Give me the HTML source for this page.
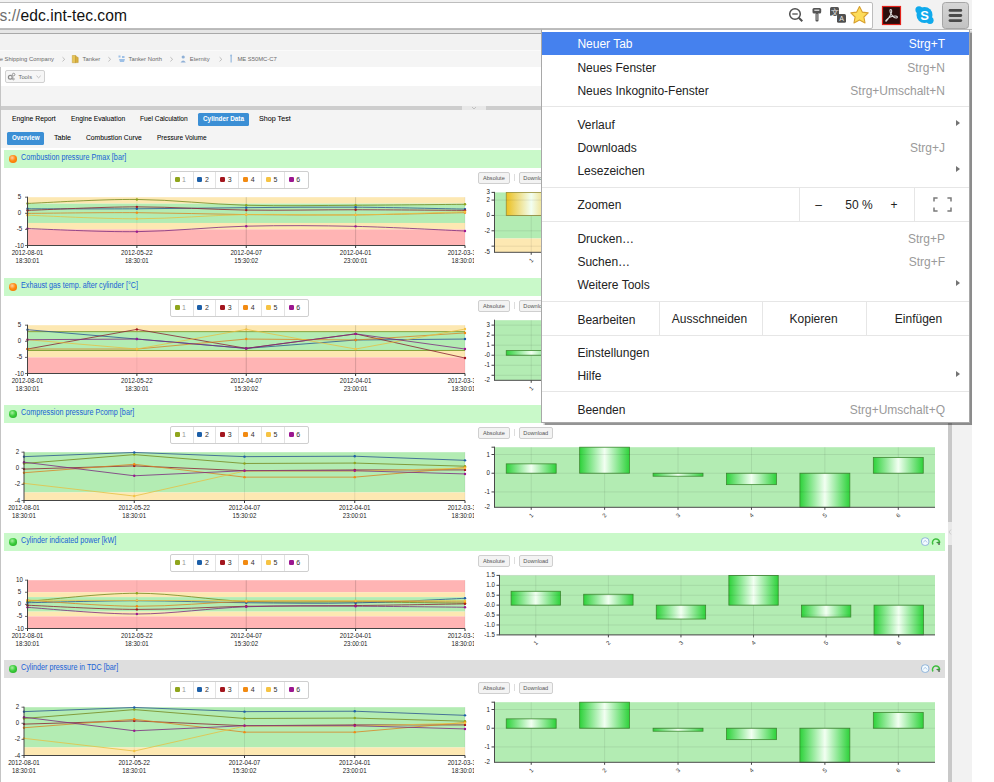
<!DOCTYPE html><html><head><meta charset="utf-8"><style>

*{margin:0;padding:0;box-sizing:border-box}
html,body{width:994px;height:782px;overflow:hidden;background:#fff;font-family:"Liberation Sans", sans-serif}
.a{position:absolute}
#chrome{position:absolute;left:0;top:0;width:994px;height:34px;background:#f2f2f2}
#url{position:absolute;left:-6px;top:2px;width:879px;height:27px;background:#fff;border:1px solid #bdbdbd;border-radius:2px}
#urltxt{position:absolute;left:-0.5px;top:7.37px;font-size:15.6px;line-height:1.117;color:#111;white-space:nowrap;letter-spacing:0.05px}
#page{position:absolute;left:0;top:34px;width:948px;height:748px;background:#f2f2f2}
.hdr{position:absolute;left:4px;width:941px;height:18px}
.orb{position:absolute;left:9px;width:7.5px;height:7.5px;border-radius:50%}
.orb.o{background:radial-gradient(circle at 40% 35%,#ffd0a0 0,#ff8a10 45%,#f07000 100%)}
.orb.g{background:radial-gradient(circle at 40% 35%,#a8f0a0 0,#3ccc3c 45%,#22a822 100%)}
.ttl{position:absolute;left:20.5px;font-size:8.4px;line-height:1.117;color:#1862d6;white-space:nowrap;transform:scaleX(0.86);transform-origin:0 0}
.leg{position:absolute;left:169.5px;width:139px;height:18px;background:#fff;border:1px solid #cfcfcf;border-radius:2px}
.li{position:absolute;top:0;width:23px;height:16px;border-right:1px solid #e2e2e2;font-size:7px;line-height:16px;color:#333;padding-left:11.6px}
.li:last-child{border-right:none}
.li i{position:absolute;left:4px;top:5px;width:5px;height:5px;border-radius:1.3px}
.li:first-child{color:#999}
.btn{position:absolute;height:12.5px;background:#f3f3f3;border:1px solid #cfcfcf;border-radius:2px;font-size:5.6px;line-height:10.5px;text-align:center;color:#555;white-space:nowrap}
.bsep{position:absolute;left:513.5px;width:1px;height:7px;background:#ddd}
.ico1{position:absolute;left:920.5px;width:8px;height:8px;border:1px solid #8ab0e0;border-radius:50%}
.ico2{position:absolute;left:931px;width:9px;height:8px}

</style></head><body>
<div id="chrome"><div id="url"></div>
<div id="urltxt"><span style="color:#6e6e6e">s://</span>edc.int-tec.com</div>
</div>
<div class="a" style="left:0;top:29px;width:972px;height:1px;background:#b9b9b9"></div>
<div class="a" style="left:0;top:30px;width:948px;height:3px;background:#e6e6e6"></div>
<div class="a" style="left:0;top:33px;width:948px;height:1px;background:#a9a9a9"></div>
<div class="a" style="left:972px;top:0;width:22px;height:782px;background:#fff"></div>
<div class="a" style="left:948px;top:34px;width:4px;height:748px;background:#c8c8c8"></div>
<div class="a" style="left:952px;top:34px;width:20px;height:748px;background:#f2f2f2"></div>
<div class="a" style="left:948px;top:521.5px;width:4px;height:23px;background:#e9e9e9"></div>
<svg class="a" style="left:948px;top:528px" width="4" height="8"><path d="M3 1.5 L1 4 L3 6.5" fill="none" stroke="#c4c4c4" stroke-width="0.8"/></svg>
<div class="a" style="left:0;top:34px;width:948px;height:16px;background:#f2f2f2"></div>
<div class="a" style="left:0;top:50px;width:948px;height:1px;background:#fafafa"></div>
<div class="a" style="left:0;top:51px;width:948px;height:16px;background:#f5f5f5"></div>
<div class="a" style="left:0;top:67px;width:948px;height:19px;background:#fff"></div>
<div class="a" style="left:0;top:86px;width:948px;height:20px;background:#f4f4f4"></div>
<div class="a" style="left:0;top:106px;width:948px;height:3.5px;background:#cdcdcd"></div>
<div class="a" style="left:462px;top:106px;width:24px;height:3.5px;background:#e8e8e8"></div>
<svg class="a" style="left:466px;top:106px" width="16" height="4"><path d="M6 1 L8 3 L10 1" fill="none" stroke="#b5b5b5" stroke-width="0.8"/></svg>
<div class="a" style="left:0;top:109.5px;width:948px;height:38.5px;background:#f4f4f4"></div>
<div class="a" style="left:0;top:148px;width:948px;height:634px;background:#fff"></div>
<div class="a" style="left:0;top:67px;width:1.2px;height:715px;background:#c4c4c4"></div>
<div class="a" style="left:-1.6px;top:55.91px;font-size:5.85px;line-height:1.117;color:#6a6a6a;white-space:nowrap;">le Shipping Company</div>
<div class="a" style="left:82.6px;top:55.91px;font-size:5.85px;line-height:1.117;color:#6a6a6a;white-space:nowrap;">Tanker</div>
<div class="a" style="left:128.5px;top:55.91px;font-size:5.85px;line-height:1.117;color:#6a6a6a;white-space:nowrap;">Tanker North</div>
<div class="a" style="left:189.8px;top:55.91px;font-size:5.85px;line-height:1.117;color:#6a6a6a;white-space:nowrap;">Eternity</div>
<div class="a" style="left:237.4px;top:55.91px;font-size:5.85px;line-height:1.117;color:#6a6a6a;white-space:nowrap;">ME S50MC-C7</div>
<svg class="a" style="left:0;top:50px" width="300" height="18">
<path d="M62.5 7.2 L64.7 9.3 L62.5 11.4" fill="none" stroke="#b5b5b5" stroke-width="0.9"/>
<path d="M108.4 7.2 L110.60000000000001 9.3 L108.4 11.4" fill="none" stroke="#b5b5b5" stroke-width="0.9"/>
<path d="M170.4 7.2 L172.6 9.3 L170.4 11.4" fill="none" stroke="#b5b5b5" stroke-width="0.9"/>
<path d="M219.6 7.2 L221.79999999999998 9.3 L219.6 11.4" fill="none" stroke="#b5b5b5" stroke-width="0.9"/>
<path d="M72.3 5.5 h3.6 v7.2 h-3.6z" fill="#e7c55a" stroke="#c9a43a" stroke-width="0.6"/><path d="M75.5 6.2 L78.2 7.5 V12.6 H75.5z" fill="#d9b040" stroke="#b8922a" stroke-width="0.5"/>
<path d="M118.5 5.5 h2 v2 h-2z M122 6 h2.5 v2 h-2.5z M119 9 h6 l-1 3 h-4z" fill="#9dc0e6"/>
<circle cx="183.2" cy="7" r="1.6" fill="#8fb0d6"/><path d="M180.6 12.5 Q183.2 8.4 185.8 12.5z" fill="#8fb0d6"/>
<rect x="230.5" y="5.5" width="1.3" height="7" fill="#9dbde0"/><circle cx="231.1" cy="5.6" r="1" fill="#9dbde0"/>
</svg>
<div class="a" style="left:5.4px;top:70.3px;width:39.4px;height:12.3px;border:1px solid #d0d0d0;border-radius:2px;background:#f6f6f6"></div>
<svg class="a" style="left:6px;top:70px" width="40" height="13"><circle cx="4.3" cy="7.3" r="1.9" fill="none" stroke="#8a8a8a" stroke-width="1.2"/><circle cx="7.6" cy="4.6" r="1.3" fill="none" stroke="#8a8a8a" stroke-width="0.9"/><circle cx="7.4" cy="9" r="0.9" fill="none" stroke="#8a8a8a" stroke-width="0.8"/><path d="M30.5 5.8 L32.6 7.8 L34.7 5.8" fill="none" stroke="#b0b0b0" stroke-width="0.8"/></svg>
<div class="a" style="left:18.5px;top:73.55px;font-size:5.8px;line-height:1.117;color:#6a6a6a;white-space:nowrap;">Tools</div>
<div class="a" style="left:12.1px;top:114.97px;font-size:7px;line-height:1.117;color:#000;white-space:nowrap;transform:scaleX(0.977);transform-origin:0 0;-webkit-text-stroke:0.04px #000">Engine Report</div>
<div class="a" style="left:70.9px;top:114.97px;font-size:7px;line-height:1.117;color:#000;white-space:nowrap;transform:scaleX(0.959);transform-origin:0 0;-webkit-text-stroke:0.04px #000">Engine Evaluation</div>
<div class="a" style="left:139.8px;top:114.97px;font-size:7px;line-height:1.117;color:#000;white-space:nowrap;transform:scaleX(0.952);transform-origin:0 0;-webkit-text-stroke:0.04px #000">Fuel Calculation</div>
<div class="a" style="left:258.5px;top:114.97px;font-size:7px;line-height:1.117;color:#000;white-space:nowrap;transform:scaleX(1.023);transform-origin:0 0;-webkit-text-stroke:0.04px #000">Shop Test</div>
<div class="a" style="left:198px;top:113px;width:51px;height:13px;background:#3b8fd5;border-radius:1.5px"></div>
<div class="a" style="left:202.7px;top:114.97px;font-size:7px;line-height:1.117;color:#fff;white-space:nowrap;font-weight:bold;transform:scaleX(0.909);transform-origin:0 0;">Cylinder Data</div>
<div class="a" style="left:7px;top:132px;width:37px;height:13px;background:#3b8fd5;border-radius:1.5px"></div>
<div class="a" style="left:12px;top:134.06px;font-size:7px;line-height:1.117;color:#fff;white-space:nowrap;font-weight:bold;transform:scaleX(0.883);transform-origin:0 0;">Overview</div>
<div class="a" style="left:53.8px;top:134.06px;font-size:7px;line-height:1.117;color:#000;white-space:nowrap;transform:scaleX(1.022);transform-origin:0 0;-webkit-text-stroke:0.04px #000">Table</div>
<div class="a" style="left:86px;top:134.06px;font-size:7px;line-height:1.117;color:#000;white-space:nowrap;transform:scaleX(0.963);transform-origin:0 0;-webkit-text-stroke:0.04px #000">Combustion Curve</div>
<div class="a" style="left:157px;top:134.06px;font-size:7px;line-height:1.117;color:#000;white-space:nowrap;transform:scaleX(0.932);transform-origin:0 0;-webkit-text-stroke:0.04px #000">Pressure Volume</div>
<div class="hdr" style="top:150px;background:#c9f9c9"></div>
<div class="orb o" style="top:155.2px"></div>
<div class="ttl" style="top:153.40px">Combustion pressure Pmax [bar]</div>
<svg class="a" style="left:920px;top:154px" width="22" height="10"><rect x="1.5" y="0.8" width="7.4" height="7.6" rx="3.2" fill="#f3fbff" stroke="#8fb3d9" stroke-width="1"/><path d="M3.3 5.5 L5.2 3.2 L7.1 5.5" fill="none" stroke="#a9c3e3" stroke-width="0.9"/><path d="M13 7.5 A3.6 3.6 0 1 1 19.6 6" fill="none" stroke="#3fbf3f" stroke-width="1.5"/><path d="M16 5.2 L19.8 4.2 L19.8 8 Z" fill="#3a9a3a"/><circle cx="19" cy="7" r="1.1" fill="#777"/></svg>
<div class="leg" style="top:171px">
<span class="li" style="left:0.0px"><i style="background:#8fa51c"></i>1</span>
<span class="li" style="left:22.9px"><i style="background:#1c5fa8"></i>2</span>
<span class="li" style="left:45.7px"><i style="background:#a3151d"></i>3</span>
<span class="li" style="left:68.6px"><i style="background:#f28a12"></i>4</span>
<span class="li" style="left:91.4px"><i style="background:#f6c343"></i>5</span>
<span class="li" style="left:114.2px"><i style="background:#9b1690"></i>6</span>
</div>
<div class="btn" style="left:478px;top:171.5px;width:31.8px">Absolute</div>
<div class="bsep" style="top:174px"></div>
<div class="btn" style="left:519px;top:171.5px;width:33.6px">Download</div>
<div class="hdr" style="top:278px;background:#c9f9c9"></div>
<div class="orb o" style="top:283.2px"></div>
<div class="ttl" style="top:281.40px">Exhaust gas temp. after cylinder [&#176;C]</div>
<svg class="a" style="left:920px;top:282px" width="22" height="10"><rect x="1.5" y="0.8" width="7.4" height="7.6" rx="3.2" fill="#f3fbff" stroke="#8fb3d9" stroke-width="1"/><path d="M3.3 5.5 L5.2 3.2 L7.1 5.5" fill="none" stroke="#a9c3e3" stroke-width="0.9"/><path d="M13 7.5 A3.6 3.6 0 1 1 19.6 6" fill="none" stroke="#3fbf3f" stroke-width="1.5"/><path d="M16 5.2 L19.8 4.2 L19.8 8 Z" fill="#3a9a3a"/><circle cx="19" cy="7" r="1.1" fill="#777"/></svg>
<div class="leg" style="top:299px">
<span class="li" style="left:0.0px"><i style="background:#8fa51c"></i>1</span>
<span class="li" style="left:22.9px"><i style="background:#1c5fa8"></i>2</span>
<span class="li" style="left:45.7px"><i style="background:#a3151d"></i>3</span>
<span class="li" style="left:68.6px"><i style="background:#f28a12"></i>4</span>
<span class="li" style="left:91.4px"><i style="background:#f6c343"></i>5</span>
<span class="li" style="left:114.2px"><i style="background:#9b1690"></i>6</span>
</div>
<div class="btn" style="left:478px;top:299.5px;width:31.8px">Absolute</div>
<div class="bsep" style="top:302px"></div>
<div class="btn" style="left:519px;top:299.5px;width:33.6px">Download</div>
<div class="hdr" style="top:405px;background:#c9f9c9"></div>
<div class="orb g" style="top:410.2px"></div>
<div class="ttl" style="top:408.40px">Compression pressure Pcomp [bar]</div>
<svg class="a" style="left:920px;top:409px" width="22" height="10"><rect x="1.5" y="0.8" width="7.4" height="7.6" rx="3.2" fill="#f3fbff" stroke="#8fb3d9" stroke-width="1"/><path d="M3.3 5.5 L5.2 3.2 L7.1 5.5" fill="none" stroke="#a9c3e3" stroke-width="0.9"/><path d="M13 7.5 A3.6 3.6 0 1 1 19.6 6" fill="none" stroke="#3fbf3f" stroke-width="1.5"/><path d="M16 5.2 L19.8 4.2 L19.8 8 Z" fill="#3a9a3a"/><circle cx="19" cy="7" r="1.1" fill="#777"/></svg>
<div class="leg" style="top:426px">
<span class="li" style="left:0.0px"><i style="background:#8fa51c"></i>1</span>
<span class="li" style="left:22.9px"><i style="background:#1c5fa8"></i>2</span>
<span class="li" style="left:45.7px"><i style="background:#a3151d"></i>3</span>
<span class="li" style="left:68.6px"><i style="background:#f28a12"></i>4</span>
<span class="li" style="left:91.4px"><i style="background:#f6c343"></i>5</span>
<span class="li" style="left:114.2px"><i style="background:#9b1690"></i>6</span>
</div>
<div class="btn" style="left:478px;top:426.5px;width:31.8px">Absolute</div>
<div class="bsep" style="top:429px"></div>
<div class="btn" style="left:519px;top:426.5px;width:33.6px">Download</div>
<div class="hdr" style="top:533px;background:#c9f9c9"></div>
<div class="orb g" style="top:538.2px"></div>
<div class="ttl" style="top:536.40px">Cylinder indicated power [kW]</div>
<svg class="a" style="left:920px;top:537px" width="22" height="10"><rect x="1.5" y="0.8" width="7.4" height="7.6" rx="3.2" fill="#f3fbff" stroke="#8fb3d9" stroke-width="1"/><path d="M3.3 5.5 L5.2 3.2 L7.1 5.5" fill="none" stroke="#a9c3e3" stroke-width="0.9"/><path d="M13 7.5 A3.6 3.6 0 1 1 19.6 6" fill="none" stroke="#3fbf3f" stroke-width="1.5"/><path d="M16 5.2 L19.8 4.2 L19.8 8 Z" fill="#3a9a3a"/><circle cx="19" cy="7" r="1.1" fill="#777"/></svg>
<div class="leg" style="top:554px">
<span class="li" style="left:0.0px"><i style="background:#8fa51c"></i>1</span>
<span class="li" style="left:22.9px"><i style="background:#1c5fa8"></i>2</span>
<span class="li" style="left:45.7px"><i style="background:#a3151d"></i>3</span>
<span class="li" style="left:68.6px"><i style="background:#f28a12"></i>4</span>
<span class="li" style="left:91.4px"><i style="background:#f6c343"></i>5</span>
<span class="li" style="left:114.2px"><i style="background:#9b1690"></i>6</span>
</div>
<div class="btn" style="left:478px;top:554.5px;width:31.8px">Absolute</div>
<div class="bsep" style="top:557px"></div>
<div class="btn" style="left:519px;top:554.5px;width:33.6px">Download</div>
<div class="hdr" style="top:660px;background:#dedede"></div>
<div class="orb g" style="top:665.2px"></div>
<div class="ttl" style="top:663.40px">Cylinder pressure in TDC [bar]</div>
<svg class="a" style="left:920px;top:664px" width="22" height="10"><rect x="1.5" y="0.8" width="7.4" height="7.6" rx="3.2" fill="#f3fbff" stroke="#8fb3d9" stroke-width="1"/><path d="M3.3 5.5 L5.2 3.2 L7.1 5.5" fill="none" stroke="#a9c3e3" stroke-width="0.9"/><path d="M13 7.5 A3.6 3.6 0 1 1 19.6 6" fill="none" stroke="#3fbf3f" stroke-width="1.5"/><path d="M16 5.2 L19.8 4.2 L19.8 8 Z" fill="#3a9a3a"/><circle cx="19" cy="7" r="1.1" fill="#777"/></svg>
<div class="leg" style="top:681px">
<span class="li" style="left:0.0px"><i style="background:#8fa51c"></i>1</span>
<span class="li" style="left:22.9px"><i style="background:#1c5fa8"></i>2</span>
<span class="li" style="left:45.7px"><i style="background:#a3151d"></i>3</span>
<span class="li" style="left:68.6px"><i style="background:#f28a12"></i>4</span>
<span class="li" style="left:91.4px"><i style="background:#f6c343"></i>5</span>
<span class="li" style="left:114.2px"><i style="background:#9b1690"></i>6</span>
</div>
<div class="btn" style="left:478px;top:681.5px;width:31.8px">Absolute</div>
<div class="bsep" style="top:684px"></div>
<div class="btn" style="left:519px;top:681.5px;width:33.6px">Download</div>
<svg class="a" style="left:0;top:0" width="994" height="782" font-family="Liberation Sans, sans-serif">
<defs><linearGradient id="gbar" x1="0" x2="1" y1="0" y2="0">
<stop offset="0" stop-color="#2dd23a"/><stop offset="0.5" stop-color="#f2fff2"/><stop offset="1" stop-color="#2dd23a"/></linearGradient>
<linearGradient id="ybar" x1="0" x2="1" y1="0" y2="0">
<stop offset="0" stop-color="#ecc020"/><stop offset="0.5" stop-color="#f2fff2"/><stop offset="1" stop-color="#ecc020"/></linearGradient></defs>
<svg x="0" y="170" width="474" height="110" viewBox="0 170 474 110" overflow="hidden">
<rect x="27.5" y="197.20" width="437.50" height="6.44" fill="#fde8b2"/>
<rect x="27.5" y="203.64" width="437.50" height="19.32" fill="#b3ecb3"/>
<rect x="27.5" y="222.96" width="437.50" height="6.44" fill="#fde8b2"/>
<rect x="27.5" y="229.40" width="437.50" height="16.10" fill="#ffb4b4"/>
<line x1="136.88" y1="197.2" x2="136.88" y2="245.5" stroke="#000" stroke-opacity="0.08" stroke-width="0.8"/>
<line x1="246.25" y1="197.2" x2="246.25" y2="245.5" stroke="#000" stroke-opacity="0.2" stroke-width="0.8"/>
<line x1="355.62" y1="197.2" x2="355.62" y2="245.5" stroke="#000" stroke-opacity="0.2" stroke-width="0.8"/>
<line x1="465.00" y1="197.2" x2="465.00" y2="245.5" stroke="#000" stroke-opacity="0.08" stroke-width="0.8"/>
<path d="M27.50,203.45 C45.73,202.78 100.42,199.15 136.88,199.45 C173.33,199.75 209.79,204.28 246.25,205.25 C282.71,206.22 319.17,205.41 355.62,205.25 C392.08,205.09 446.77,204.44 465.00,204.28" fill="none" stroke="#74881e" stroke-width="1" stroke-opacity="0.8"/>
<circle cx="27.50" cy="203.45" r="1.2" fill="#8fa51c"/>
<circle cx="136.88" cy="199.45" r="1.2" fill="#8fa51c"/>
<circle cx="246.25" cy="205.25" r="1.2" fill="#8fa51c"/>
<circle cx="355.62" cy="205.25" r="1.2" fill="#8fa51c"/>
<circle cx="465.00" cy="204.28" r="1.2" fill="#8fa51c"/>
<path d="M27.50,208.79 C45.73,208.79 100.42,208.98 136.88,208.79 C173.33,208.60 209.79,207.93 246.25,207.66 C282.71,207.40 319.17,206.94 355.62,207.18 C392.08,207.42 446.77,208.79 465.00,209.11" fill="none" stroke="#2a5590" stroke-width="1" stroke-opacity="0.8"/>
<circle cx="27.50" cy="208.79" r="1.2" fill="#1c5fa8"/>
<circle cx="136.88" cy="208.79" r="1.2" fill="#1c5fa8"/>
<circle cx="246.25" cy="207.66" r="1.2" fill="#1c5fa8"/>
<circle cx="355.62" cy="207.18" r="1.2" fill="#1c5fa8"/>
<circle cx="465.00" cy="209.11" r="1.2" fill="#1c5fa8"/>
<path d="M27.50,210.40 C45.73,209.81 100.42,206.91 136.88,206.86 C173.33,206.81 209.79,209.60 246.25,210.08 C282.71,210.56 319.17,209.70 355.62,209.76 C392.08,209.81 446.77,210.29 465.00,210.40" fill="none" stroke="#8a2232" stroke-width="1" stroke-opacity="0.8"/>
<circle cx="27.50" cy="210.40" r="1.2" fill="#a3151d"/>
<circle cx="136.88" cy="206.86" r="1.2" fill="#a3151d"/>
<circle cx="246.25" cy="210.08" r="1.2" fill="#a3151d"/>
<circle cx="355.62" cy="209.76" r="1.2" fill="#a3151d"/>
<circle cx="465.00" cy="210.40" r="1.2" fill="#a3151d"/>
<path d="M27.50,213.40 C45.73,213.27 100.42,212.46 136.88,212.66 C173.33,212.85 209.79,214.21 246.25,214.59 C282.71,214.96 319.17,215.23 355.62,214.91 C392.08,214.59 446.77,213.03 465.00,212.66" fill="none" stroke="#d88424" stroke-width="1" stroke-opacity="0.8"/>
<circle cx="27.50" cy="213.40" r="1.2" fill="#f28a12"/>
<circle cx="136.88" cy="212.66" r="1.2" fill="#f28a12"/>
<circle cx="246.25" cy="214.59" r="1.2" fill="#f28a12"/>
<circle cx="355.62" cy="214.91" r="1.2" fill="#f28a12"/>
<circle cx="465.00" cy="212.66" r="1.2" fill="#f28a12"/>
<path d="M27.50,215.23 C45.73,215.82 100.42,218.88 136.88,218.77 C173.33,218.67 209.79,215.23 246.25,214.59 C282.71,213.94 319.17,215.39 355.62,214.91 C392.08,214.43 446.77,212.23 465.00,211.69" fill="none" stroke="#e6c044" stroke-width="1" stroke-opacity="0.8"/>
<circle cx="27.50" cy="215.23" r="1.2" fill="#f6c343"/>
<circle cx="136.88" cy="218.77" r="1.2" fill="#f6c343"/>
<circle cx="246.25" cy="214.59" r="1.2" fill="#f6c343"/>
<circle cx="355.62" cy="214.91" r="1.2" fill="#f6c343"/>
<circle cx="465.00" cy="211.69" r="1.2" fill="#f6c343"/>
<path d="M27.50,228.59 C45.73,229.10 100.42,232.06 136.88,231.65 C173.33,231.25 209.79,227.06 246.25,226.18 C282.71,225.30 319.17,225.57 355.62,226.37 C392.08,227.18 446.77,230.24 465.00,231.01" fill="none" stroke="#7a2a7e" stroke-width="1" stroke-opacity="0.8"/>
<circle cx="27.50" cy="228.59" r="1.2" fill="#9b1690"/>
<circle cx="136.88" cy="231.65" r="1.2" fill="#9b1690"/>
<circle cx="246.25" cy="226.18" r="1.2" fill="#9b1690"/>
<circle cx="355.62" cy="226.37" r="1.2" fill="#9b1690"/>
<circle cx="465.00" cy="231.01" r="1.2" fill="#9b1690"/>
<line x1="27.5" y1="196.7" x2="27.5" y2="245.5" stroke="#444" stroke-width="1"/>
<line x1="27.0" y1="245.5" x2="465.0" y2="245.5" stroke="#444" stroke-width="1"/>
<line x1="25.0" y1="197.20" x2="27.5" y2="197.20" stroke="#444" stroke-width="0.8"/>
<text x="19.50" y="199.20" font-size="6.7" fill="#1a1a1a" text-anchor="middle" textLength="3.42" lengthAdjust="spacingAndGlyphs" >5</text>
<line x1="25.0" y1="213.30" x2="27.5" y2="213.30" stroke="#444" stroke-width="0.8"/>
<text x="19.50" y="215.30" font-size="6.7" fill="#1a1a1a" text-anchor="middle" textLength="3.42" lengthAdjust="spacingAndGlyphs" >0</text>
<line x1="25.0" y1="229.40" x2="27.5" y2="229.40" stroke="#444" stroke-width="0.8"/>
<text x="19.50" y="231.40" font-size="6.7" fill="#1a1a1a" text-anchor="middle" textLength="5.47" lengthAdjust="spacingAndGlyphs" >-5</text>
<line x1="25.0" y1="245.50" x2="27.5" y2="245.50" stroke="#444" stroke-width="0.8"/>
<text x="19.50" y="247.50" font-size="6.7" fill="#1a1a1a" text-anchor="middle" textLength="8.89" lengthAdjust="spacingAndGlyphs" >-10</text>
<line x1="27.50" y1="245.5" x2="27.50" y2="248.0" stroke="#333" stroke-width="1"/>
<text x="27.50" y="255.10" font-size="6.7" fill="#1a1a1a" text-anchor="middle" textLength="31.6" lengthAdjust="spacingAndGlyphs">2012-08-01</text>
<text x="27.50" y="262.60" font-size="6.7" fill="#1a1a1a" text-anchor="middle" textLength="23.8" lengthAdjust="spacingAndGlyphs">18:30:01</text>
<line x1="136.88" y1="245.5" x2="136.88" y2="248.0" stroke="#333" stroke-width="1"/>
<text x="136.88" y="255.10" font-size="6.7" fill="#1a1a1a" text-anchor="middle" textLength="31.6" lengthAdjust="spacingAndGlyphs">2012-05-22</text>
<text x="136.88" y="262.60" font-size="6.7" fill="#1a1a1a" text-anchor="middle" textLength="23.8" lengthAdjust="spacingAndGlyphs">18:30:01</text>
<line x1="246.25" y1="245.5" x2="246.25" y2="248.0" stroke="#333" stroke-width="1"/>
<text x="246.25" y="255.10" font-size="6.7" fill="#1a1a1a" text-anchor="middle" textLength="31.6" lengthAdjust="spacingAndGlyphs">2012-04-07</text>
<text x="246.25" y="262.60" font-size="6.7" fill="#1a1a1a" text-anchor="middle" textLength="23.8" lengthAdjust="spacingAndGlyphs">15:30:02</text>
<line x1="355.62" y1="245.5" x2="355.62" y2="248.0" stroke="#333" stroke-width="1"/>
<text x="355.62" y="255.10" font-size="6.7" fill="#1a1a1a" text-anchor="middle" textLength="31.6" lengthAdjust="spacingAndGlyphs">2012-04-01</text>
<text x="355.62" y="262.60" font-size="6.7" fill="#1a1a1a" text-anchor="middle" textLength="23.8" lengthAdjust="spacingAndGlyphs">23:00:01</text>
<line x1="465.00" y1="245.5" x2="465.00" y2="248.0" stroke="#333" stroke-width="1"/>
<text x="463.50" y="255.10" font-size="6.7" fill="#1a1a1a" text-anchor="middle" textLength="31.6" lengthAdjust="spacingAndGlyphs">2012-03-31</text>
<text x="463.50" y="262.60" font-size="6.7" fill="#1a1a1a" text-anchor="middle" textLength="23.8" lengthAdjust="spacingAndGlyphs">18:30:01</text>
</svg>
<svg x="0" y="298" width="474" height="110" viewBox="0 298 474 110" overflow="hidden">
<rect x="27.5" y="325.20" width="437.50" height="6.44" fill="#fde8b2"/>
<rect x="27.5" y="331.64" width="437.50" height="19.32" fill="#b3ecb3"/>
<rect x="27.5" y="350.96" width="437.50" height="6.44" fill="#fde8b2"/>
<rect x="27.5" y="357.40" width="437.50" height="16.10" fill="#ffb4b4"/>
<line x1="136.88" y1="325.2" x2="136.88" y2="373.5" stroke="#000" stroke-opacity="0.08" stroke-width="0.8"/>
<line x1="246.25" y1="325.2" x2="246.25" y2="373.5" stroke="#000" stroke-opacity="0.2" stroke-width="0.8"/>
<line x1="355.62" y1="325.2" x2="355.62" y2="373.5" stroke="#000" stroke-opacity="0.2" stroke-width="0.8"/>
<line x1="465.00" y1="325.2" x2="465.00" y2="373.5" stroke="#000" stroke-opacity="0.08" stroke-width="0.8"/>
<line x1="27.5" y1="331.64" x2="465.0" y2="331.64" stroke="#7f9a2a" stroke-width="0.9"/>
<line x1="27.5" y1="350.48" x2="465.0" y2="350.48" stroke="#7f9a2a" stroke-width="0.9"/>
<path d="M27.50,329.71 L136.88,339.05 L246.25,348.38 L355.62,340.01 L465.00,339.05" fill="none" stroke="#2a5590" stroke-width="1" stroke-opacity="0.8"/>
<circle cx="27.50" cy="329.71" r="1.2" fill="#1c5fa8"/>
<circle cx="136.88" cy="339.05" r="1.2" fill="#1c5fa8"/>
<circle cx="246.25" cy="348.38" r="1.2" fill="#1c5fa8"/>
<circle cx="355.62" cy="340.01" r="1.2" fill="#1c5fa8"/>
<circle cx="465.00" cy="339.05" r="1.2" fill="#1c5fa8"/>
<path d="M27.50,349.03 L136.88,329.39 L246.25,348.38 L355.62,333.89 L465.00,358.04" fill="none" stroke="#8a2232" stroke-width="1" stroke-opacity="0.8"/>
<circle cx="27.50" cy="349.03" r="1.2" fill="#a3151d"/>
<circle cx="136.88" cy="329.39" r="1.2" fill="#a3151d"/>
<circle cx="246.25" cy="348.38" r="1.2" fill="#a3151d"/>
<circle cx="355.62" cy="333.89" r="1.2" fill="#a3151d"/>
<circle cx="465.00" cy="358.04" r="1.2" fill="#a3151d"/>
<path d="M27.50,349.03 L136.88,349.03 L246.25,339.05 L355.62,340.01 L465.00,332.93" fill="none" stroke="#d88424" stroke-width="1" stroke-opacity="0.8"/>
<circle cx="27.50" cy="349.03" r="1.2" fill="#f28a12"/>
<circle cx="136.88" cy="349.03" r="1.2" fill="#f28a12"/>
<circle cx="246.25" cy="339.05" r="1.2" fill="#f28a12"/>
<circle cx="355.62" cy="340.01" r="1.2" fill="#f28a12"/>
<circle cx="465.00" cy="332.93" r="1.2" fill="#f28a12"/>
<path d="M27.50,339.69 L136.88,349.03 L246.25,329.39 L355.62,349.03 L465.00,329.06" fill="none" stroke="#e6c044" stroke-width="1" stroke-opacity="0.8"/>
<circle cx="27.50" cy="339.69" r="1.2" fill="#f6c343"/>
<circle cx="136.88" cy="349.03" r="1.2" fill="#f6c343"/>
<circle cx="246.25" cy="329.39" r="1.2" fill="#f6c343"/>
<circle cx="355.62" cy="349.03" r="1.2" fill="#f6c343"/>
<circle cx="465.00" cy="329.06" r="1.2" fill="#f6c343"/>
<path d="M27.50,339.69 L136.88,339.05 L246.25,348.38 L355.62,333.89 L465.00,349.03" fill="none" stroke="#7a2a7e" stroke-width="1" stroke-opacity="0.8"/>
<circle cx="27.50" cy="339.69" r="1.2" fill="#9b1690"/>
<circle cx="136.88" cy="339.05" r="1.2" fill="#9b1690"/>
<circle cx="246.25" cy="348.38" r="1.2" fill="#9b1690"/>
<circle cx="355.62" cy="333.89" r="1.2" fill="#9b1690"/>
<circle cx="465.00" cy="349.03" r="1.2" fill="#9b1690"/>
<line x1="27.5" y1="324.7" x2="27.5" y2="373.5" stroke="#444" stroke-width="1"/>
<line x1="27.0" y1="373.5" x2="465.0" y2="373.5" stroke="#444" stroke-width="1"/>
<line x1="25.0" y1="325.20" x2="27.5" y2="325.20" stroke="#444" stroke-width="0.8"/>
<text x="19.50" y="327.20" font-size="6.7" fill="#1a1a1a" text-anchor="middle" textLength="3.42" lengthAdjust="spacingAndGlyphs" >5</text>
<line x1="25.0" y1="341.30" x2="27.5" y2="341.30" stroke="#444" stroke-width="0.8"/>
<text x="19.50" y="343.30" font-size="6.7" fill="#1a1a1a" text-anchor="middle" textLength="3.42" lengthAdjust="spacingAndGlyphs" >0</text>
<line x1="25.0" y1="357.40" x2="27.5" y2="357.40" stroke="#444" stroke-width="0.8"/>
<text x="19.50" y="359.40" font-size="6.7" fill="#1a1a1a" text-anchor="middle" textLength="5.47" lengthAdjust="spacingAndGlyphs" >-5</text>
<line x1="25.0" y1="373.50" x2="27.5" y2="373.50" stroke="#444" stroke-width="0.8"/>
<text x="19.50" y="375.50" font-size="6.7" fill="#1a1a1a" text-anchor="middle" textLength="8.89" lengthAdjust="spacingAndGlyphs" >-10</text>
<line x1="27.50" y1="373.5" x2="27.50" y2="376.0" stroke="#333" stroke-width="1"/>
<text x="27.50" y="383.10" font-size="6.7" fill="#1a1a1a" text-anchor="middle" textLength="31.6" lengthAdjust="spacingAndGlyphs">2012-08-01</text>
<text x="27.50" y="390.60" font-size="6.7" fill="#1a1a1a" text-anchor="middle" textLength="23.8" lengthAdjust="spacingAndGlyphs">18:30:01</text>
<line x1="136.88" y1="373.5" x2="136.88" y2="376.0" stroke="#333" stroke-width="1"/>
<text x="136.88" y="383.10" font-size="6.7" fill="#1a1a1a" text-anchor="middle" textLength="31.6" lengthAdjust="spacingAndGlyphs">2012-05-22</text>
<text x="136.88" y="390.60" font-size="6.7" fill="#1a1a1a" text-anchor="middle" textLength="23.8" lengthAdjust="spacingAndGlyphs">18:30:01</text>
<line x1="246.25" y1="373.5" x2="246.25" y2="376.0" stroke="#333" stroke-width="1"/>
<text x="246.25" y="383.10" font-size="6.7" fill="#1a1a1a" text-anchor="middle" textLength="31.6" lengthAdjust="spacingAndGlyphs">2012-04-07</text>
<text x="246.25" y="390.60" font-size="6.7" fill="#1a1a1a" text-anchor="middle" textLength="23.8" lengthAdjust="spacingAndGlyphs">15:30:02</text>
<line x1="355.62" y1="373.5" x2="355.62" y2="376.0" stroke="#333" stroke-width="1"/>
<text x="355.62" y="383.10" font-size="6.7" fill="#1a1a1a" text-anchor="middle" textLength="31.6" lengthAdjust="spacingAndGlyphs">2012-04-01</text>
<text x="355.62" y="390.60" font-size="6.7" fill="#1a1a1a" text-anchor="middle" textLength="23.8" lengthAdjust="spacingAndGlyphs">23:00:01</text>
<line x1="465.00" y1="373.5" x2="465.00" y2="376.0" stroke="#333" stroke-width="1"/>
<text x="463.50" y="383.10" font-size="6.7" fill="#1a1a1a" text-anchor="middle" textLength="31.6" lengthAdjust="spacingAndGlyphs">2012-03-31</text>
<text x="463.50" y="390.60" font-size="6.7" fill="#1a1a1a" text-anchor="middle" textLength="23.8" lengthAdjust="spacingAndGlyphs">18:30:01</text>
</svg>
<svg x="0" y="425" width="474" height="110" viewBox="0 425 474 110" overflow="hidden">
<rect x="24" y="452.20" width="441.00" height="40.25" fill="#b3ecb3"/>
<rect x="24" y="492.45" width="441.00" height="8.05" fill="#fde8b2"/>
<line x1="134.25" y1="452.2" x2="134.25" y2="500.5" stroke="#000" stroke-opacity="0.08" stroke-width="0.8"/>
<line x1="244.50" y1="452.2" x2="244.50" y2="500.5" stroke="#000" stroke-opacity="0.1" stroke-width="0.8"/>
<line x1="354.75" y1="452.2" x2="354.75" y2="500.5" stroke="#000" stroke-opacity="0.1" stroke-width="0.8"/>
<line x1="465.00" y1="452.2" x2="465.00" y2="500.5" stroke="#000" stroke-opacity="0.08" stroke-width="0.8"/>
<path d="M24.00,463.47 L134.25,454.62 L244.50,463.47 L354.75,463.07 L465.00,466.21" fill="none" stroke="#74881e" stroke-width="1" stroke-opacity="0.8"/>
<circle cx="24.00" cy="463.47" r="1.2" fill="#8fa51c"/>
<circle cx="134.25" cy="454.62" r="1.2" fill="#8fa51c"/>
<circle cx="244.50" cy="463.47" r="1.2" fill="#8fa51c"/>
<circle cx="354.75" cy="463.07" r="1.2" fill="#8fa51c"/>
<circle cx="465.00" cy="466.21" r="1.2" fill="#8fa51c"/>
<path d="M24.00,456.63 L134.25,452.44 L244.50,456.63 L354.75,456.22 L465.00,460.33" fill="none" stroke="#2a5590" stroke-width="1" stroke-opacity="0.8"/>
<circle cx="24.00" cy="456.63" r="1.2" fill="#1c5fa8"/>
<circle cx="134.25" cy="452.44" r="1.2" fill="#1c5fa8"/>
<circle cx="244.50" cy="456.63" r="1.2" fill="#1c5fa8"/>
<circle cx="354.75" cy="456.22" r="1.2" fill="#1c5fa8"/>
<circle cx="465.00" cy="460.33" r="1.2" fill="#1c5fa8"/>
<path d="M24.00,469.11 L134.25,465.88 L244.50,470.71 L354.75,469.91 L465.00,469.91" fill="none" stroke="#8a2232" stroke-width="1" stroke-opacity="0.8"/>
<circle cx="24.00" cy="469.11" r="1.2" fill="#a3151d"/>
<circle cx="134.25" cy="465.88" r="1.2" fill="#a3151d"/>
<circle cx="244.50" cy="470.71" r="1.2" fill="#a3151d"/>
<circle cx="354.75" cy="469.91" r="1.2" fill="#a3151d"/>
<circle cx="465.00" cy="469.91" r="1.2" fill="#a3151d"/>
<path d="M24.00,472.73 L134.25,464.27 L244.50,477.15 L354.75,477.15 L465.00,467.50" fill="none" stroke="#d88424" stroke-width="1" stroke-opacity="0.8"/>
<circle cx="24.00" cy="472.73" r="1.2" fill="#f28a12"/>
<circle cx="134.25" cy="464.27" r="1.2" fill="#f28a12"/>
<circle cx="244.50" cy="477.15" r="1.2" fill="#f28a12"/>
<circle cx="354.75" cy="477.15" r="1.2" fill="#f28a12"/>
<circle cx="465.00" cy="467.50" r="1.2" fill="#f28a12"/>
<path d="M24.00,483.35 L134.25,496.07 L244.50,471.12 L354.75,471.12 L465.00,468.06" fill="none" stroke="#e6c044" stroke-width="1" stroke-opacity="0.8"/>
<circle cx="24.00" cy="483.35" r="1.2" fill="#f6c343"/>
<circle cx="134.25" cy="496.07" r="1.2" fill="#f6c343"/>
<circle cx="244.50" cy="471.12" r="1.2" fill="#f6c343"/>
<circle cx="354.75" cy="471.12" r="1.2" fill="#f6c343"/>
<circle cx="465.00" cy="468.06" r="1.2" fill="#f6c343"/>
<path d="M24.00,462.18 L134.25,475.79 L244.50,470.71 L354.75,470.71 L465.00,473.94" fill="none" stroke="#7a2a7e" stroke-width="1" stroke-opacity="0.8"/>
<circle cx="24.00" cy="462.18" r="1.2" fill="#9b1690"/>
<circle cx="134.25" cy="475.79" r="1.2" fill="#9b1690"/>
<circle cx="244.50" cy="470.71" r="1.2" fill="#9b1690"/>
<circle cx="354.75" cy="470.71" r="1.2" fill="#9b1690"/>
<circle cx="465.00" cy="473.94" r="1.2" fill="#9b1690"/>
<line x1="24" y1="451.7" x2="24" y2="500.5" stroke="#444" stroke-width="1"/>
<line x1="23.5" y1="500.5" x2="465.0" y2="500.5" stroke="#444" stroke-width="1"/>
<line x1="21.5" y1="452.20" x2="24" y2="452.20" stroke="#444" stroke-width="0.8"/>
<text x="17.40" y="454.20" font-size="6.7" fill="#1a1a1a" text-anchor="middle" textLength="3.42" lengthAdjust="spacingAndGlyphs" >2</text>
<line x1="21.5" y1="468.30" x2="24" y2="468.30" stroke="#444" stroke-width="0.8"/>
<text x="17.40" y="470.30" font-size="6.7" fill="#1a1a1a" text-anchor="middle" textLength="3.42" lengthAdjust="spacingAndGlyphs" >0</text>
<line x1="21.5" y1="484.40" x2="24" y2="484.40" stroke="#444" stroke-width="0.8"/>
<text x="17.40" y="486.40" font-size="6.7" fill="#1a1a1a" text-anchor="middle" textLength="5.47" lengthAdjust="spacingAndGlyphs" >-2</text>
<line x1="21.5" y1="500.50" x2="24" y2="500.50" stroke="#444" stroke-width="0.8"/>
<text x="17.40" y="502.50" font-size="6.7" fill="#1a1a1a" text-anchor="middle" textLength="5.47" lengthAdjust="spacingAndGlyphs" >-4</text>
<line x1="24.00" y1="500.5" x2="24.00" y2="503.0" stroke="#333" stroke-width="1"/>
<text x="24.00" y="510.10" font-size="6.7" fill="#1a1a1a" text-anchor="middle" textLength="31.6" lengthAdjust="spacingAndGlyphs">2012-08-01</text>
<text x="24.00" y="517.60" font-size="6.7" fill="#1a1a1a" text-anchor="middle" textLength="23.8" lengthAdjust="spacingAndGlyphs">18:30:01</text>
<line x1="134.25" y1="500.5" x2="134.25" y2="503.0" stroke="#333" stroke-width="1"/>
<text x="134.25" y="510.10" font-size="6.7" fill="#1a1a1a" text-anchor="middle" textLength="31.6" lengthAdjust="spacingAndGlyphs">2012-05-22</text>
<text x="134.25" y="517.60" font-size="6.7" fill="#1a1a1a" text-anchor="middle" textLength="23.8" lengthAdjust="spacingAndGlyphs">18:30:01</text>
<line x1="244.50" y1="500.5" x2="244.50" y2="503.0" stroke="#333" stroke-width="1"/>
<text x="244.50" y="510.10" font-size="6.7" fill="#1a1a1a" text-anchor="middle" textLength="31.6" lengthAdjust="spacingAndGlyphs">2012-04-07</text>
<text x="244.50" y="517.60" font-size="6.7" fill="#1a1a1a" text-anchor="middle" textLength="23.8" lengthAdjust="spacingAndGlyphs">15:30:02</text>
<line x1="354.75" y1="500.5" x2="354.75" y2="503.0" stroke="#333" stroke-width="1"/>
<text x="354.75" y="510.10" font-size="6.7" fill="#1a1a1a" text-anchor="middle" textLength="31.6" lengthAdjust="spacingAndGlyphs">2012-04-01</text>
<text x="354.75" y="517.60" font-size="6.7" fill="#1a1a1a" text-anchor="middle" textLength="23.8" lengthAdjust="spacingAndGlyphs">23:00:01</text>
<line x1="465.00" y1="500.5" x2="465.00" y2="503.0" stroke="#333" stroke-width="1"/>
<text x="463.50" y="510.10" font-size="6.7" fill="#1a1a1a" text-anchor="middle" textLength="31.6" lengthAdjust="spacingAndGlyphs">2012-03-31</text>
<text x="463.50" y="517.60" font-size="6.7" fill="#1a1a1a" text-anchor="middle" textLength="23.8" lengthAdjust="spacingAndGlyphs">18:30:01</text>
</svg>
<svg x="0" y="553" width="474" height="110" viewBox="0 553 474 110" overflow="hidden">
<rect x="27.5" y="580.20" width="437.50" height="12.08" fill="#ffb4b4"/>
<rect x="27.5" y="592.28" width="437.50" height="4.83" fill="#fde8b2"/>
<rect x="27.5" y="597.11" width="437.50" height="14.49" fill="#b3ecb3"/>
<rect x="27.5" y="611.60" width="437.50" height="4.83" fill="#fde8b2"/>
<rect x="27.5" y="616.42" width="437.50" height="12.08" fill="#ffb4b4"/>
<line x1="136.88" y1="580.2" x2="136.88" y2="628.5" stroke="#000" stroke-opacity="0.08" stroke-width="0.8"/>
<line x1="246.25" y1="580.2" x2="246.25" y2="628.5" stroke="#000" stroke-opacity="0.2" stroke-width="0.8"/>
<line x1="355.62" y1="580.2" x2="355.62" y2="628.5" stroke="#000" stroke-opacity="0.2" stroke-width="0.8"/>
<line x1="465.00" y1="580.2" x2="465.00" y2="628.5" stroke="#000" stroke-opacity="0.08" stroke-width="0.8"/>
<path d="M27.50,601.45 C45.73,600.08 100.42,593.24 136.88,593.24 C173.33,593.24 209.79,600.00 246.25,601.45 C282.71,602.90 319.17,601.65 355.62,601.94 C392.08,602.22 446.77,602.94 465.00,603.14" fill="none" stroke="#74881e" stroke-width="1" stroke-opacity="0.8"/>
<circle cx="27.50" cy="601.45" r="1.2" fill="#8fa51c"/>
<circle cx="136.88" cy="593.24" r="1.2" fill="#8fa51c"/>
<circle cx="246.25" cy="601.45" r="1.2" fill="#8fa51c"/>
<circle cx="355.62" cy="601.94" r="1.2" fill="#8fa51c"/>
<circle cx="465.00" cy="603.14" r="1.2" fill="#8fa51c"/>
<path d="M27.50,602.73 C45.73,602.40 100.42,600.73 136.88,600.73 C173.33,600.73 209.79,602.37 246.25,602.73 C282.71,603.09 319.17,603.64 355.62,602.90 C392.08,602.16 446.77,599.08 465.00,598.31" fill="none" stroke="#2a5590" stroke-width="1" stroke-opacity="0.8"/>
<circle cx="27.50" cy="602.73" r="1.2" fill="#1c5fa8"/>
<circle cx="136.88" cy="600.73" r="1.2" fill="#1c5fa8"/>
<circle cx="246.25" cy="602.73" r="1.2" fill="#1c5fa8"/>
<circle cx="355.62" cy="602.90" r="1.2" fill="#1c5fa8"/>
<circle cx="465.00" cy="598.31" r="1.2" fill="#1c5fa8"/>
<path d="M27.50,605.24 C45.73,605.94 100.42,609.25 136.88,609.42 C173.33,609.59 209.79,606.93 246.25,606.28 C282.71,605.64 319.17,605.96 355.62,605.56 C392.08,605.15 446.77,604.15 465.00,603.87" fill="none" stroke="#8a2232" stroke-width="1" stroke-opacity="0.8"/>
<circle cx="27.50" cy="605.24" r="1.2" fill="#a3151d"/>
<circle cx="136.88" cy="609.42" r="1.2" fill="#a3151d"/>
<circle cx="246.25" cy="606.28" r="1.2" fill="#a3151d"/>
<circle cx="355.62" cy="605.56" r="1.2" fill="#a3151d"/>
<circle cx="465.00" cy="603.87" r="1.2" fill="#a3151d"/>
<path d="M27.50,600.24 C45.73,601.25 100.42,606.08 136.88,606.28 C173.33,606.48 209.79,602.30 246.25,601.45 C282.71,600.61 319.17,601.13 355.62,601.21 C392.08,601.29 446.77,601.81 465.00,601.94" fill="none" stroke="#d88424" stroke-width="1" stroke-opacity="0.8"/>
<circle cx="27.50" cy="600.24" r="1.2" fill="#f28a12"/>
<circle cx="136.88" cy="606.28" r="1.2" fill="#f28a12"/>
<circle cx="246.25" cy="601.45" r="1.2" fill="#f28a12"/>
<circle cx="355.62" cy="601.21" r="1.2" fill="#f28a12"/>
<circle cx="465.00" cy="601.94" r="1.2" fill="#f28a12"/>
<path d="M27.50,600.24 C45.73,600.28 100.42,600.41 136.88,600.49 C173.33,600.57 209.79,600.69 246.25,600.73 C282.71,600.77 319.17,600.73 355.62,600.73 C392.08,600.73 446.77,600.73 465.00,600.73" fill="none" stroke="#e6c044" stroke-width="1" stroke-opacity="0.8"/>
<circle cx="27.50" cy="600.24" r="1.2" fill="#f6c343"/>
<circle cx="136.88" cy="600.49" r="1.2" fill="#f6c343"/>
<circle cx="246.25" cy="600.73" r="1.2" fill="#f6c343"/>
<circle cx="355.62" cy="600.73" r="1.2" fill="#f6c343"/>
<circle cx="465.00" cy="600.73" r="1.2" fill="#f6c343"/>
<path d="M27.50,607.37 C45.73,608.48 100.42,614.11 136.88,614.01 C173.33,613.91 209.79,608.05 246.25,606.76 C282.71,605.48 319.17,606.20 355.62,606.28 C392.08,606.36 446.77,607.09 465.00,607.25" fill="none" stroke="#7a2a7e" stroke-width="1" stroke-opacity="0.8"/>
<circle cx="27.50" cy="607.37" r="1.2" fill="#9b1690"/>
<circle cx="136.88" cy="614.01" r="1.2" fill="#9b1690"/>
<circle cx="246.25" cy="606.76" r="1.2" fill="#9b1690"/>
<circle cx="355.62" cy="606.28" r="1.2" fill="#9b1690"/>
<circle cx="465.00" cy="607.25" r="1.2" fill="#9b1690"/>
<line x1="27.5" y1="579.7" x2="27.5" y2="628.5" stroke="#444" stroke-width="1"/>
<line x1="27.0" y1="628.5" x2="465.0" y2="628.5" stroke="#444" stroke-width="1"/>
<line x1="25.0" y1="580.20" x2="27.5" y2="580.20" stroke="#444" stroke-width="0.8"/>
<text x="19.50" y="582.20" font-size="6.7" fill="#1a1a1a" text-anchor="middle" textLength="6.84" lengthAdjust="spacingAndGlyphs" >10</text>
<line x1="25.0" y1="592.28" x2="27.5" y2="592.28" stroke="#444" stroke-width="0.8"/>
<text x="19.50" y="594.28" font-size="6.7" fill="#1a1a1a" text-anchor="middle" textLength="3.42" lengthAdjust="spacingAndGlyphs" >5</text>
<line x1="25.0" y1="604.35" x2="27.5" y2="604.35" stroke="#444" stroke-width="0.8"/>
<text x="19.50" y="606.35" font-size="6.7" fill="#1a1a1a" text-anchor="middle" textLength="3.42" lengthAdjust="spacingAndGlyphs" >0</text>
<line x1="25.0" y1="616.42" x2="27.5" y2="616.42" stroke="#444" stroke-width="0.8"/>
<text x="19.50" y="618.42" font-size="6.7" fill="#1a1a1a" text-anchor="middle" textLength="5.47" lengthAdjust="spacingAndGlyphs" >-5</text>
<line x1="25.0" y1="628.50" x2="27.5" y2="628.50" stroke="#444" stroke-width="0.8"/>
<text x="19.50" y="630.50" font-size="6.7" fill="#1a1a1a" text-anchor="middle" textLength="8.89" lengthAdjust="spacingAndGlyphs" >-10</text>
<line x1="27.50" y1="628.5" x2="27.50" y2="631.0" stroke="#333" stroke-width="1"/>
<text x="27.50" y="638.10" font-size="6.7" fill="#1a1a1a" text-anchor="middle" textLength="31.6" lengthAdjust="spacingAndGlyphs">2012-08-01</text>
<text x="27.50" y="645.60" font-size="6.7" fill="#1a1a1a" text-anchor="middle" textLength="23.8" lengthAdjust="spacingAndGlyphs">18:30:01</text>
<line x1="136.88" y1="628.5" x2="136.88" y2="631.0" stroke="#333" stroke-width="1"/>
<text x="136.88" y="638.10" font-size="6.7" fill="#1a1a1a" text-anchor="middle" textLength="31.6" lengthAdjust="spacingAndGlyphs">2012-05-22</text>
<text x="136.88" y="645.60" font-size="6.7" fill="#1a1a1a" text-anchor="middle" textLength="23.8" lengthAdjust="spacingAndGlyphs">18:30:01</text>
<line x1="246.25" y1="628.5" x2="246.25" y2="631.0" stroke="#333" stroke-width="1"/>
<text x="246.25" y="638.10" font-size="6.7" fill="#1a1a1a" text-anchor="middle" textLength="31.6" lengthAdjust="spacingAndGlyphs">2012-04-07</text>
<text x="246.25" y="645.60" font-size="6.7" fill="#1a1a1a" text-anchor="middle" textLength="23.8" lengthAdjust="spacingAndGlyphs">15:30:02</text>
<line x1="355.62" y1="628.5" x2="355.62" y2="631.0" stroke="#333" stroke-width="1"/>
<text x="355.62" y="638.10" font-size="6.7" fill="#1a1a1a" text-anchor="middle" textLength="31.6" lengthAdjust="spacingAndGlyphs">2012-04-01</text>
<text x="355.62" y="645.60" font-size="6.7" fill="#1a1a1a" text-anchor="middle" textLength="23.8" lengthAdjust="spacingAndGlyphs">23:00:01</text>
<line x1="465.00" y1="628.5" x2="465.00" y2="631.0" stroke="#333" stroke-width="1"/>
<text x="463.50" y="638.10" font-size="6.7" fill="#1a1a1a" text-anchor="middle" textLength="31.6" lengthAdjust="spacingAndGlyphs">2012-03-31</text>
<text x="463.50" y="645.60" font-size="6.7" fill="#1a1a1a" text-anchor="middle" textLength="23.8" lengthAdjust="spacingAndGlyphs">18:30:01</text>
</svg>
<svg x="0" y="680" width="474" height="110" viewBox="0 680 474 110" overflow="hidden">
<rect x="24" y="707.20" width="441.00" height="40.25" fill="#b3ecb3"/>
<rect x="24" y="747.45" width="441.00" height="8.05" fill="#fde8b2"/>
<line x1="134.25" y1="707.2" x2="134.25" y2="755.5" stroke="#000" stroke-opacity="0.08" stroke-width="0.8"/>
<line x1="244.50" y1="707.2" x2="244.50" y2="755.5" stroke="#000" stroke-opacity="0.1" stroke-width="0.8"/>
<line x1="354.75" y1="707.2" x2="354.75" y2="755.5" stroke="#000" stroke-opacity="0.1" stroke-width="0.8"/>
<line x1="465.00" y1="707.2" x2="465.00" y2="755.5" stroke="#000" stroke-opacity="0.08" stroke-width="0.8"/>
<path d="M24.00,718.47 L134.25,709.62 L244.50,718.47 L354.75,718.07 L465.00,721.21" fill="none" stroke="#74881e" stroke-width="1" stroke-opacity="0.8"/>
<circle cx="24.00" cy="718.47" r="1.2" fill="#8fa51c"/>
<circle cx="134.25" cy="709.62" r="1.2" fill="#8fa51c"/>
<circle cx="244.50" cy="718.47" r="1.2" fill="#8fa51c"/>
<circle cx="354.75" cy="718.07" r="1.2" fill="#8fa51c"/>
<circle cx="465.00" cy="721.21" r="1.2" fill="#8fa51c"/>
<path d="M24.00,711.63 L134.25,707.44 L244.50,711.63 L354.75,711.23 L465.00,715.33" fill="none" stroke="#2a5590" stroke-width="1" stroke-opacity="0.8"/>
<circle cx="24.00" cy="711.63" r="1.2" fill="#1c5fa8"/>
<circle cx="134.25" cy="707.44" r="1.2" fill="#1c5fa8"/>
<circle cx="244.50" cy="711.63" r="1.2" fill="#1c5fa8"/>
<circle cx="354.75" cy="711.23" r="1.2" fill="#1c5fa8"/>
<circle cx="465.00" cy="715.33" r="1.2" fill="#1c5fa8"/>
<path d="M24.00,724.11 L134.25,720.88 L244.50,725.72 L354.75,724.91 L465.00,724.91" fill="none" stroke="#8a2232" stroke-width="1" stroke-opacity="0.8"/>
<circle cx="24.00" cy="724.11" r="1.2" fill="#a3151d"/>
<circle cx="134.25" cy="720.88" r="1.2" fill="#a3151d"/>
<circle cx="244.50" cy="725.72" r="1.2" fill="#a3151d"/>
<circle cx="354.75" cy="724.91" r="1.2" fill="#a3151d"/>
<circle cx="465.00" cy="724.91" r="1.2" fill="#a3151d"/>
<path d="M24.00,727.73 L134.25,719.28 L244.50,732.15 L354.75,732.15 L465.00,722.50" fill="none" stroke="#d88424" stroke-width="1" stroke-opacity="0.8"/>
<circle cx="24.00" cy="727.73" r="1.2" fill="#f28a12"/>
<circle cx="134.25" cy="719.28" r="1.2" fill="#f28a12"/>
<circle cx="244.50" cy="732.15" r="1.2" fill="#f28a12"/>
<circle cx="354.75" cy="732.15" r="1.2" fill="#f28a12"/>
<circle cx="465.00" cy="722.50" r="1.2" fill="#f28a12"/>
<path d="M24.00,738.35 L134.25,751.07 L244.50,726.12 L354.75,726.12 L465.00,723.06" fill="none" stroke="#e6c044" stroke-width="1" stroke-opacity="0.8"/>
<circle cx="24.00" cy="738.35" r="1.2" fill="#f6c343"/>
<circle cx="134.25" cy="751.07" r="1.2" fill="#f6c343"/>
<circle cx="244.50" cy="726.12" r="1.2" fill="#f6c343"/>
<circle cx="354.75" cy="726.12" r="1.2" fill="#f6c343"/>
<circle cx="465.00" cy="723.06" r="1.2" fill="#f6c343"/>
<path d="M24.00,717.18 L134.25,730.79 L244.50,725.72 L354.75,725.72 L465.00,728.94" fill="none" stroke="#7a2a7e" stroke-width="1" stroke-opacity="0.8"/>
<circle cx="24.00" cy="717.18" r="1.2" fill="#9b1690"/>
<circle cx="134.25" cy="730.79" r="1.2" fill="#9b1690"/>
<circle cx="244.50" cy="725.72" r="1.2" fill="#9b1690"/>
<circle cx="354.75" cy="725.72" r="1.2" fill="#9b1690"/>
<circle cx="465.00" cy="728.94" r="1.2" fill="#9b1690"/>
<line x1="24" y1="706.7" x2="24" y2="755.5" stroke="#444" stroke-width="1"/>
<line x1="23.5" y1="755.5" x2="465.0" y2="755.5" stroke="#444" stroke-width="1"/>
<line x1="21.5" y1="707.20" x2="24" y2="707.20" stroke="#444" stroke-width="0.8"/>
<text x="17.40" y="709.20" font-size="6.7" fill="#1a1a1a" text-anchor="middle" textLength="3.42" lengthAdjust="spacingAndGlyphs" >2</text>
<line x1="21.5" y1="723.30" x2="24" y2="723.30" stroke="#444" stroke-width="0.8"/>
<text x="17.40" y="725.30" font-size="6.7" fill="#1a1a1a" text-anchor="middle" textLength="3.42" lengthAdjust="spacingAndGlyphs" >0</text>
<line x1="21.5" y1="739.40" x2="24" y2="739.40" stroke="#444" stroke-width="0.8"/>
<text x="17.40" y="741.40" font-size="6.7" fill="#1a1a1a" text-anchor="middle" textLength="5.47" lengthAdjust="spacingAndGlyphs" >-2</text>
<line x1="21.5" y1="755.50" x2="24" y2="755.50" stroke="#444" stroke-width="0.8"/>
<text x="17.40" y="757.50" font-size="6.7" fill="#1a1a1a" text-anchor="middle" textLength="5.47" lengthAdjust="spacingAndGlyphs" >-4</text>
<line x1="24.00" y1="755.5" x2="24.00" y2="758.0" stroke="#333" stroke-width="1"/>
<text x="24.00" y="765.10" font-size="6.7" fill="#1a1a1a" text-anchor="middle" textLength="31.6" lengthAdjust="spacingAndGlyphs">2012-08-01</text>
<text x="24.00" y="772.60" font-size="6.7" fill="#1a1a1a" text-anchor="middle" textLength="23.8" lengthAdjust="spacingAndGlyphs">18:30:01</text>
<line x1="134.25" y1="755.5" x2="134.25" y2="758.0" stroke="#333" stroke-width="1"/>
<text x="134.25" y="765.10" font-size="6.7" fill="#1a1a1a" text-anchor="middle" textLength="31.6" lengthAdjust="spacingAndGlyphs">2012-05-22</text>
<text x="134.25" y="772.60" font-size="6.7" fill="#1a1a1a" text-anchor="middle" textLength="23.8" lengthAdjust="spacingAndGlyphs">18:30:01</text>
<line x1="244.50" y1="755.5" x2="244.50" y2="758.0" stroke="#333" stroke-width="1"/>
<text x="244.50" y="765.10" font-size="6.7" fill="#1a1a1a" text-anchor="middle" textLength="31.6" lengthAdjust="spacingAndGlyphs">2012-04-07</text>
<text x="244.50" y="772.60" font-size="6.7" fill="#1a1a1a" text-anchor="middle" textLength="23.8" lengthAdjust="spacingAndGlyphs">15:30:02</text>
<line x1="354.75" y1="755.5" x2="354.75" y2="758.0" stroke="#333" stroke-width="1"/>
<text x="354.75" y="765.10" font-size="6.7" fill="#1a1a1a" text-anchor="middle" textLength="31.6" lengthAdjust="spacingAndGlyphs">2012-04-01</text>
<text x="354.75" y="772.60" font-size="6.7" fill="#1a1a1a" text-anchor="middle" textLength="23.8" lengthAdjust="spacingAndGlyphs">23:00:01</text>
<line x1="465.00" y1="755.5" x2="465.00" y2="758.0" stroke="#333" stroke-width="1"/>
<text x="463.50" y="765.10" font-size="6.7" fill="#1a1a1a" text-anchor="middle" textLength="31.6" lengthAdjust="spacingAndGlyphs">2012-03-31</text>
<text x="463.50" y="772.60" font-size="6.7" fill="#1a1a1a" text-anchor="middle" textLength="23.8" lengthAdjust="spacingAndGlyphs">18:30:01</text>
</svg>
<svg x="476" y="186" width="470" height="92" viewBox="476 186 470 92" overflow="hidden">
<rect x="494.5" y="192.40" width="440.50" height="46.08" fill="#b3ecb3"/>
<rect x="494.5" y="238.48" width="440.50" height="13.82" fill="#fde8b2"/>
<line x1="531.21" y1="192.4" x2="531.21" y2="252.3" stroke="#000" stroke-opacity="0.09" stroke-width="0.9"/>
<line x1="604.62" y1="192.4" x2="604.62" y2="252.3" stroke="#000" stroke-opacity="0.09" stroke-width="0.9"/>
<line x1="678.04" y1="192.4" x2="678.04" y2="252.3" stroke="#000" stroke-opacity="0.09" stroke-width="0.9"/>
<line x1="751.46" y1="192.4" x2="751.46" y2="252.3" stroke="#000" stroke-opacity="0.09" stroke-width="0.9"/>
<line x1="824.88" y1="192.4" x2="824.88" y2="252.3" stroke="#000" stroke-opacity="0.09" stroke-width="0.9"/>
<line x1="898.29" y1="192.4" x2="898.29" y2="252.3" stroke="#000" stroke-opacity="0.09" stroke-width="0.9"/>
<rect x="506.25" y="192.40" width="49.92" height="23.04" fill="url(#ybar)" stroke="#9a8f3a" stroke-width="0.8"/>
<rect x="579.66" y="207.76" width="49.92" height="7.68" fill="url(#ybar)" stroke="#9a8f3a" stroke-width="0.8"/>
<rect x="653.08" y="207.76" width="49.92" height="7.68" fill="url(#ybar)" stroke="#9a8f3a" stroke-width="0.8"/>
<rect x="726.50" y="207.76" width="49.92" height="7.68" fill="url(#ybar)" stroke="#9a8f3a" stroke-width="0.8"/>
<rect x="799.91" y="207.76" width="49.92" height="7.68" fill="url(#ybar)" stroke="#9a8f3a" stroke-width="0.8"/>
<rect x="873.33" y="207.76" width="49.92" height="7.68" fill="url(#ybar)" stroke="#9a8f3a" stroke-width="0.8"/>
<line x1="494.5" y1="200.08" x2="935.0" y2="200.08" stroke="#000" stroke-opacity="0.09" stroke-width="0.9"/>
<line x1="494.5" y1="215.44" x2="935.0" y2="215.44" stroke="#000" stroke-opacity="0.09" stroke-width="0.9"/>
<line x1="494.5" y1="230.80" x2="935.0" y2="230.80" stroke="#000" stroke-opacity="0.09" stroke-width="0.9"/>
<line x1="494.5" y1="246.16" x2="935.0" y2="246.16" stroke="#000" stroke-opacity="0.09" stroke-width="0.9"/>
<line x1="494.5" y1="191.9" x2="494.5" y2="252.3" stroke="#4a4a4a" stroke-width="1"/>
<line x1="494.0" y1="252.3" x2="935.0" y2="252.3" stroke="#4a4a4a" stroke-width="1"/>
<line x1="491.5" y1="192.40" x2="494.5" y2="192.40" stroke="#444" stroke-width="1"/>
<line x1="491.5" y1="200.08" x2="494.5" y2="200.08" stroke="#444" stroke-width="1"/>
<line x1="491.5" y1="215.44" x2="494.5" y2="215.44" stroke="#444" stroke-width="1"/>
<line x1="491.5" y1="230.80" x2="494.5" y2="230.80" stroke="#444" stroke-width="1"/>
<line x1="491.5" y1="246.16" x2="494.5" y2="246.16" stroke="#444" stroke-width="1"/>
<text x="489.90" y="194.40" font-size="6.7" fill="#1a1a1a" text-anchor="end" textLength="3.42" lengthAdjust="spacingAndGlyphs" >3</text>
<text x="489.90" y="202.08" font-size="6.7" fill="#1a1a1a" text-anchor="end" textLength="3.42" lengthAdjust="spacingAndGlyphs" >2</text>
<text x="489.90" y="217.44" font-size="6.7" fill="#1a1a1a" text-anchor="end" textLength="3.42" lengthAdjust="spacingAndGlyphs" >0</text>
<text x="489.90" y="232.80" font-size="6.7" fill="#1a1a1a" text-anchor="end" textLength="5.47" lengthAdjust="spacingAndGlyphs" >-2</text>
<text x="489.90" y="254.30" font-size="6.7" fill="#1a1a1a" text-anchor="end" textLength="5.47" lengthAdjust="spacingAndGlyphs" >-5</text>
<line x1="531.21" y1="252.3" x2="531.21" y2="254.8" stroke="#444" stroke-width="1"/>
<text x="531.21" y="262.30" font-size="6" fill="#333" text-anchor="middle" transform="rotate(-45 531.21 260.30)">1</text>
<line x1="604.62" y1="252.3" x2="604.62" y2="254.8" stroke="#444" stroke-width="1"/>
<text x="604.62" y="262.30" font-size="6" fill="#333" text-anchor="middle" transform="rotate(-45 604.62 260.30)">2</text>
<line x1="678.04" y1="252.3" x2="678.04" y2="254.8" stroke="#444" stroke-width="1"/>
<text x="678.04" y="262.30" font-size="6" fill="#333" text-anchor="middle" transform="rotate(-45 678.04 260.30)">3</text>
<line x1="751.46" y1="252.3" x2="751.46" y2="254.8" stroke="#444" stroke-width="1"/>
<text x="751.46" y="262.30" font-size="6" fill="#333" text-anchor="middle" transform="rotate(-45 751.46 260.30)">4</text>
<line x1="824.88" y1="252.3" x2="824.88" y2="254.8" stroke="#444" stroke-width="1"/>
<text x="824.88" y="262.30" font-size="6" fill="#333" text-anchor="middle" transform="rotate(-45 824.88 260.30)">5</text>
<line x1="898.29" y1="252.3" x2="898.29" y2="254.8" stroke="#444" stroke-width="1"/>
<text x="898.29" y="262.30" font-size="6" fill="#333" text-anchor="middle" transform="rotate(-45 898.29 260.30)">6</text>
</svg>
<svg x="476" y="314" width="470" height="92" viewBox="476 314 470 92" overflow="hidden">
<rect x="494.5" y="320.20" width="440.50" height="60.10" fill="#b3ecb3"/>
<line x1="531.21" y1="320.2" x2="531.21" y2="380.3" stroke="#000" stroke-opacity="0.09" stroke-width="0.9"/>
<line x1="604.62" y1="320.2" x2="604.62" y2="380.3" stroke="#000" stroke-opacity="0.09" stroke-width="0.9"/>
<line x1="678.04" y1="320.2" x2="678.04" y2="380.3" stroke="#000" stroke-opacity="0.09" stroke-width="0.9"/>
<line x1="751.46" y1="320.2" x2="751.46" y2="380.3" stroke="#000" stroke-opacity="0.09" stroke-width="0.9"/>
<line x1="824.88" y1="320.2" x2="824.88" y2="380.3" stroke="#000" stroke-opacity="0.09" stroke-width="0.9"/>
<line x1="898.29" y1="320.2" x2="898.29" y2="380.3" stroke="#000" stroke-opacity="0.09" stroke-width="0.9"/>
<rect x="506.25" y="350.60" width="49.92" height="4.62" fill="url(#gbar)" stroke="#3f8a32" stroke-width="0.8"/>
<rect x="579.66" y="352.21" width="49.92" height="3.01" fill="url(#gbar)" stroke="#3f8a32" stroke-width="0.8"/>
<rect x="653.08" y="352.21" width="49.92" height="3.01" fill="url(#gbar)" stroke="#3f8a32" stroke-width="0.8"/>
<rect x="726.50" y="352.21" width="49.92" height="3.01" fill="url(#gbar)" stroke="#3f8a32" stroke-width="0.8"/>
<rect x="799.91" y="352.21" width="49.92" height="3.01" fill="url(#gbar)" stroke="#3f8a32" stroke-width="0.8"/>
<rect x="873.33" y="352.21" width="49.92" height="3.01" fill="url(#gbar)" stroke="#3f8a32" stroke-width="0.8"/>
<line x1="494.5" y1="325.12" x2="935.0" y2="325.12" stroke="#000" stroke-opacity="0.09" stroke-width="0.9"/>
<line x1="494.5" y1="335.15" x2="935.0" y2="335.15" stroke="#000" stroke-opacity="0.09" stroke-width="0.9"/>
<line x1="494.5" y1="345.18" x2="935.0" y2="345.18" stroke="#000" stroke-opacity="0.09" stroke-width="0.9"/>
<line x1="494.5" y1="355.22" x2="935.0" y2="355.22" stroke="#000" stroke-opacity="0.09" stroke-width="0.9"/>
<line x1="494.5" y1="365.25" x2="935.0" y2="365.25" stroke="#000" stroke-opacity="0.09" stroke-width="0.9"/>
<line x1="494.5" y1="375.28" x2="935.0" y2="375.28" stroke="#000" stroke-opacity="0.09" stroke-width="0.9"/>
<line x1="494.5" y1="319.7" x2="494.5" y2="380.3" stroke="#4a4a4a" stroke-width="1"/>
<line x1="494.0" y1="380.3" x2="935.0" y2="380.3" stroke="#4a4a4a" stroke-width="1"/>
<line x1="491.5" y1="325.12" x2="494.5" y2="325.12" stroke="#444" stroke-width="1"/>
<line x1="491.5" y1="335.15" x2="494.5" y2="335.15" stroke="#444" stroke-width="1"/>
<line x1="491.5" y1="345.18" x2="494.5" y2="345.18" stroke="#444" stroke-width="1"/>
<line x1="491.5" y1="355.22" x2="494.5" y2="355.22" stroke="#444" stroke-width="1"/>
<line x1="491.5" y1="365.25" x2="494.5" y2="365.25" stroke="#444" stroke-width="1"/>
<line x1="491.5" y1="375.28" x2="494.5" y2="375.28" stroke="#444" stroke-width="1"/>
<text x="489.90" y="327.12" font-size="6.7" fill="#1a1a1a" text-anchor="end" textLength="3.42" lengthAdjust="spacingAndGlyphs" >3</text>
<text x="489.90" y="337.15" font-size="6.7" fill="#1a1a1a" text-anchor="end" textLength="3.42" lengthAdjust="spacingAndGlyphs" >2</text>
<text x="489.90" y="347.18" font-size="6.7" fill="#1a1a1a" text-anchor="end" textLength="3.42" lengthAdjust="spacingAndGlyphs" >1</text>
<text x="489.90" y="357.22" font-size="6.7" fill="#1a1a1a" text-anchor="end" textLength="5.47" lengthAdjust="spacingAndGlyphs" >-0</text>
<text x="489.90" y="367.25" font-size="6.7" fill="#1a1a1a" text-anchor="end" textLength="5.47" lengthAdjust="spacingAndGlyphs" >-1</text>
<text x="489.90" y="382.30" font-size="6.7" fill="#1a1a1a" text-anchor="end" textLength="5.47" lengthAdjust="spacingAndGlyphs" >-2</text>
<line x1="531.21" y1="380.3" x2="531.21" y2="382.8" stroke="#444" stroke-width="1"/>
<text x="531.21" y="390.30" font-size="6" fill="#333" text-anchor="middle" transform="rotate(-45 531.21 388.30)">1</text>
<line x1="604.62" y1="380.3" x2="604.62" y2="382.8" stroke="#444" stroke-width="1"/>
<text x="604.62" y="390.30" font-size="6" fill="#333" text-anchor="middle" transform="rotate(-45 604.62 388.30)">2</text>
<line x1="678.04" y1="380.3" x2="678.04" y2="382.8" stroke="#444" stroke-width="1"/>
<text x="678.04" y="390.30" font-size="6" fill="#333" text-anchor="middle" transform="rotate(-45 678.04 388.30)">3</text>
<line x1="751.46" y1="380.3" x2="751.46" y2="382.8" stroke="#444" stroke-width="1"/>
<text x="751.46" y="390.30" font-size="6" fill="#333" text-anchor="middle" transform="rotate(-45 751.46 388.30)">4</text>
<line x1="824.88" y1="380.3" x2="824.88" y2="382.8" stroke="#444" stroke-width="1"/>
<text x="824.88" y="390.30" font-size="6" fill="#333" text-anchor="middle" transform="rotate(-45 824.88 388.30)">5</text>
<line x1="898.29" y1="380.3" x2="898.29" y2="382.8" stroke="#444" stroke-width="1"/>
<text x="898.29" y="390.30" font-size="6" fill="#333" text-anchor="middle" transform="rotate(-45 898.29 388.30)">6</text>
</svg>
<svg x="476" y="441" width="470" height="92" viewBox="476 441 470 92" overflow="hidden">
<rect x="494.5" y="447.20" width="440.50" height="60.10" fill="#b3ecb3"/>
<line x1="531.21" y1="447.2" x2="531.21" y2="507.3" stroke="#000" stroke-opacity="0.09" stroke-width="0.9"/>
<line x1="604.62" y1="447.2" x2="604.62" y2="507.3" stroke="#000" stroke-opacity="0.09" stroke-width="0.9"/>
<line x1="678.04" y1="447.2" x2="678.04" y2="507.3" stroke="#000" stroke-opacity="0.09" stroke-width="0.9"/>
<line x1="751.46" y1="447.2" x2="751.46" y2="507.3" stroke="#000" stroke-opacity="0.09" stroke-width="0.9"/>
<line x1="824.88" y1="447.2" x2="824.88" y2="507.3" stroke="#000" stroke-opacity="0.09" stroke-width="0.9"/>
<line x1="898.29" y1="447.2" x2="898.29" y2="507.3" stroke="#000" stroke-opacity="0.09" stroke-width="0.9"/>
<rect x="506.25" y="463.86" width="49.92" height="9.36" fill="url(#gbar)" stroke="#3f8a32" stroke-width="0.8"/>
<rect x="579.66" y="447.20" width="49.92" height="26.02" fill="url(#gbar)" stroke="#3f8a32" stroke-width="0.8"/>
<rect x="653.08" y="473.22" width="49.92" height="3.00" fill="url(#gbar)" stroke="#3f8a32" stroke-width="0.8"/>
<rect x="726.50" y="473.22" width="49.92" height="11.42" fill="url(#gbar)" stroke="#3f8a32" stroke-width="0.8"/>
<rect x="799.91" y="473.22" width="49.92" height="34.08" fill="url(#gbar)" stroke="#3f8a32" stroke-width="0.8"/>
<rect x="873.33" y="457.50" width="49.92" height="15.73" fill="url(#gbar)" stroke="#3f8a32" stroke-width="0.8"/>
<line x1="494.5" y1="454.50" x2="935.0" y2="454.50" stroke="#000" stroke-opacity="0.09" stroke-width="0.9"/>
<line x1="494.5" y1="473.22" x2="935.0" y2="473.22" stroke="#000" stroke-opacity="0.09" stroke-width="0.9"/>
<line x1="494.5" y1="491.95" x2="935.0" y2="491.95" stroke="#000" stroke-opacity="0.09" stroke-width="0.9"/>
<line x1="494.5" y1="446.7" x2="494.5" y2="507.3" stroke="#4a4a4a" stroke-width="1"/>
<line x1="494.0" y1="507.3" x2="935.0" y2="507.3" stroke="#4a4a4a" stroke-width="1"/>
<line x1="491.5" y1="447.20" x2="494.5" y2="447.20" stroke="#444" stroke-width="1"/>
<line x1="491.5" y1="454.50" x2="494.5" y2="454.50" stroke="#444" stroke-width="1"/>
<line x1="491.5" y1="473.22" x2="494.5" y2="473.22" stroke="#444" stroke-width="1"/>
<line x1="491.5" y1="491.95" x2="494.5" y2="491.95" stroke="#444" stroke-width="1"/>
<text x="489.90" y="456.50" font-size="6.7" fill="#1a1a1a" text-anchor="end" textLength="3.42" lengthAdjust="spacingAndGlyphs" >1</text>
<text x="489.90" y="475.22" font-size="6.7" fill="#1a1a1a" text-anchor="end" textLength="3.42" lengthAdjust="spacingAndGlyphs" >0</text>
<text x="489.90" y="493.95" font-size="6.7" fill="#1a1a1a" text-anchor="end" textLength="5.47" lengthAdjust="spacingAndGlyphs" >-1</text>
<text x="489.90" y="509.30" font-size="6.7" fill="#1a1a1a" text-anchor="end" textLength="5.47" lengthAdjust="spacingAndGlyphs" >-2</text>
<line x1="531.21" y1="507.3" x2="531.21" y2="509.8" stroke="#444" stroke-width="1"/>
<text x="531.21" y="517.30" font-size="6" fill="#333" text-anchor="middle" transform="rotate(-45 531.21 515.30)">1</text>
<line x1="604.62" y1="507.3" x2="604.62" y2="509.8" stroke="#444" stroke-width="1"/>
<text x="604.62" y="517.30" font-size="6" fill="#333" text-anchor="middle" transform="rotate(-45 604.62 515.30)">2</text>
<line x1="678.04" y1="507.3" x2="678.04" y2="509.8" stroke="#444" stroke-width="1"/>
<text x="678.04" y="517.30" font-size="6" fill="#333" text-anchor="middle" transform="rotate(-45 678.04 515.30)">3</text>
<line x1="751.46" y1="507.3" x2="751.46" y2="509.8" stroke="#444" stroke-width="1"/>
<text x="751.46" y="517.30" font-size="6" fill="#333" text-anchor="middle" transform="rotate(-45 751.46 515.30)">4</text>
<line x1="824.88" y1="507.3" x2="824.88" y2="509.8" stroke="#444" stroke-width="1"/>
<text x="824.88" y="517.30" font-size="6" fill="#333" text-anchor="middle" transform="rotate(-45 824.88 515.30)">5</text>
<line x1="898.29" y1="507.3" x2="898.29" y2="509.8" stroke="#444" stroke-width="1"/>
<text x="898.29" y="517.30" font-size="6" fill="#333" text-anchor="middle" transform="rotate(-45 898.29 515.30)">6</text>
</svg>
<svg x="476" y="569" width="470" height="92" viewBox="476 569 470 92" overflow="hidden">
<rect x="499.5" y="575.40" width="435.50" height="59.50" fill="#b3ecb3"/>
<line x1="535.79" y1="575.4" x2="535.79" y2="634.9" stroke="#000" stroke-opacity="0.09" stroke-width="0.9"/>
<line x1="608.38" y1="575.4" x2="608.38" y2="634.9" stroke="#000" stroke-opacity="0.09" stroke-width="0.9"/>
<line x1="680.96" y1="575.4" x2="680.96" y2="634.9" stroke="#000" stroke-opacity="0.09" stroke-width="0.9"/>
<line x1="753.54" y1="575.4" x2="753.54" y2="634.9" stroke="#000" stroke-opacity="0.09" stroke-width="0.9"/>
<line x1="826.12" y1="575.4" x2="826.12" y2="634.9" stroke="#000" stroke-opacity="0.09" stroke-width="0.9"/>
<line x1="898.71" y1="575.4" x2="898.71" y2="634.9" stroke="#000" stroke-opacity="0.09" stroke-width="0.9"/>
<rect x="511.11" y="591.27" width="49.36" height="13.88" fill="url(#gbar)" stroke="#3f8a32" stroke-width="0.8"/>
<rect x="583.70" y="594.24" width="49.36" height="10.91" fill="url(#gbar)" stroke="#3f8a32" stroke-width="0.8"/>
<rect x="656.28" y="605.15" width="49.36" height="13.88" fill="url(#gbar)" stroke="#3f8a32" stroke-width="0.8"/>
<rect x="728.86" y="575.40" width="49.36" height="29.75" fill="url(#gbar)" stroke="#3f8a32" stroke-width="0.8"/>
<rect x="801.45" y="605.15" width="49.36" height="11.90" fill="url(#gbar)" stroke="#3f8a32" stroke-width="0.8"/>
<rect x="874.03" y="605.15" width="49.36" height="29.75" fill="url(#gbar)" stroke="#3f8a32" stroke-width="0.8"/>
<line x1="499.5" y1="575.40" x2="935.0" y2="575.40" stroke="#000" stroke-opacity="0.09" stroke-width="0.9"/>
<line x1="499.5" y1="585.32" x2="935.0" y2="585.32" stroke="#000" stroke-opacity="0.09" stroke-width="0.9"/>
<line x1="499.5" y1="595.23" x2="935.0" y2="595.23" stroke="#000" stroke-opacity="0.09" stroke-width="0.9"/>
<line x1="499.5" y1="605.15" x2="935.0" y2="605.15" stroke="#000" stroke-opacity="0.09" stroke-width="0.9"/>
<line x1="499.5" y1="615.07" x2="935.0" y2="615.07" stroke="#000" stroke-opacity="0.09" stroke-width="0.9"/>
<line x1="499.5" y1="624.98" x2="935.0" y2="624.98" stroke="#000" stroke-opacity="0.09" stroke-width="0.9"/>
<line x1="499.5" y1="634.90" x2="935.0" y2="634.90" stroke="#000" stroke-opacity="0.09" stroke-width="0.9"/>
<line x1="499.5" y1="574.9" x2="499.5" y2="634.9" stroke="#4a4a4a" stroke-width="1"/>
<line x1="499.0" y1="634.9" x2="935.0" y2="634.9" stroke="#4a4a4a" stroke-width="1"/>
<line x1="496.5" y1="575.40" x2="499.5" y2="575.40" stroke="#444" stroke-width="1"/>
<line x1="496.5" y1="585.32" x2="499.5" y2="585.32" stroke="#444" stroke-width="1"/>
<line x1="496.5" y1="595.23" x2="499.5" y2="595.23" stroke="#444" stroke-width="1"/>
<line x1="496.5" y1="605.15" x2="499.5" y2="605.15" stroke="#444" stroke-width="1"/>
<line x1="496.5" y1="615.07" x2="499.5" y2="615.07" stroke="#444" stroke-width="1"/>
<line x1="496.5" y1="624.98" x2="499.5" y2="624.98" stroke="#444" stroke-width="1"/>
<line x1="496.5" y1="634.90" x2="499.5" y2="634.90" stroke="#444" stroke-width="1"/>
<text x="494.90" y="577.40" font-size="6.7" fill="#1a1a1a" text-anchor="end" textLength="8.55" lengthAdjust="spacingAndGlyphs" >1.5</text>
<text x="494.90" y="587.32" font-size="6.7" fill="#1a1a1a" text-anchor="end" textLength="8.55" lengthAdjust="spacingAndGlyphs" >1.0</text>
<text x="494.90" y="597.23" font-size="6.7" fill="#1a1a1a" text-anchor="end" textLength="8.55" lengthAdjust="spacingAndGlyphs" >0.5</text>
<text x="494.90" y="607.15" font-size="6.7" fill="#1a1a1a" text-anchor="end" textLength="10.60" lengthAdjust="spacingAndGlyphs" >-0.0</text>
<text x="494.90" y="617.07" font-size="6.7" fill="#1a1a1a" text-anchor="end" textLength="10.60" lengthAdjust="spacingAndGlyphs" >-0.5</text>
<text x="494.90" y="626.98" font-size="6.7" fill="#1a1a1a" text-anchor="end" textLength="10.60" lengthAdjust="spacingAndGlyphs" >-1.0</text>
<text x="494.90" y="636.90" font-size="6.7" fill="#1a1a1a" text-anchor="end" textLength="10.60" lengthAdjust="spacingAndGlyphs" >-1.5</text>
<line x1="535.79" y1="634.9" x2="535.79" y2="637.4" stroke="#444" stroke-width="1"/>
<text x="535.79" y="644.90" font-size="6" fill="#333" text-anchor="middle" transform="rotate(-45 535.79 642.90)">1</text>
<line x1="608.38" y1="634.9" x2="608.38" y2="637.4" stroke="#444" stroke-width="1"/>
<text x="608.38" y="644.90" font-size="6" fill="#333" text-anchor="middle" transform="rotate(-45 608.38 642.90)">2</text>
<line x1="680.96" y1="634.9" x2="680.96" y2="637.4" stroke="#444" stroke-width="1"/>
<text x="680.96" y="644.90" font-size="6" fill="#333" text-anchor="middle" transform="rotate(-45 680.96 642.90)">3</text>
<line x1="753.54" y1="634.9" x2="753.54" y2="637.4" stroke="#444" stroke-width="1"/>
<text x="753.54" y="644.90" font-size="6" fill="#333" text-anchor="middle" transform="rotate(-45 753.54 642.90)">4</text>
<line x1="826.12" y1="634.9" x2="826.12" y2="637.4" stroke="#444" stroke-width="1"/>
<text x="826.12" y="644.90" font-size="6" fill="#333" text-anchor="middle" transform="rotate(-45 826.12 642.90)">5</text>
<line x1="898.71" y1="634.9" x2="898.71" y2="637.4" stroke="#444" stroke-width="1"/>
<text x="898.71" y="644.90" font-size="6" fill="#333" text-anchor="middle" transform="rotate(-45 898.71 642.90)">6</text>
</svg>
<svg x="476" y="696" width="470" height="92" viewBox="476 696 470 92" overflow="hidden">
<rect x="494.5" y="702.20" width="440.50" height="60.10" fill="#b3ecb3"/>
<line x1="531.21" y1="702.2" x2="531.21" y2="762.3" stroke="#000" stroke-opacity="0.09" stroke-width="0.9"/>
<line x1="604.62" y1="702.2" x2="604.62" y2="762.3" stroke="#000" stroke-opacity="0.09" stroke-width="0.9"/>
<line x1="678.04" y1="702.2" x2="678.04" y2="762.3" stroke="#000" stroke-opacity="0.09" stroke-width="0.9"/>
<line x1="751.46" y1="702.2" x2="751.46" y2="762.3" stroke="#000" stroke-opacity="0.09" stroke-width="0.9"/>
<line x1="824.88" y1="702.2" x2="824.88" y2="762.3" stroke="#000" stroke-opacity="0.09" stroke-width="0.9"/>
<line x1="898.29" y1="702.2" x2="898.29" y2="762.3" stroke="#000" stroke-opacity="0.09" stroke-width="0.9"/>
<rect x="506.25" y="718.86" width="49.92" height="9.36" fill="url(#gbar)" stroke="#3f8a32" stroke-width="0.8"/>
<rect x="579.66" y="702.20" width="49.92" height="26.02" fill="url(#gbar)" stroke="#3f8a32" stroke-width="0.8"/>
<rect x="653.08" y="728.22" width="49.92" height="3.00" fill="url(#gbar)" stroke="#3f8a32" stroke-width="0.8"/>
<rect x="726.50" y="728.22" width="49.92" height="11.42" fill="url(#gbar)" stroke="#3f8a32" stroke-width="0.8"/>
<rect x="799.91" y="728.22" width="49.92" height="34.08" fill="url(#gbar)" stroke="#3f8a32" stroke-width="0.8"/>
<rect x="873.33" y="712.50" width="49.92" height="15.73" fill="url(#gbar)" stroke="#3f8a32" stroke-width="0.8"/>
<line x1="494.5" y1="709.50" x2="935.0" y2="709.50" stroke="#000" stroke-opacity="0.09" stroke-width="0.9"/>
<line x1="494.5" y1="728.22" x2="935.0" y2="728.22" stroke="#000" stroke-opacity="0.09" stroke-width="0.9"/>
<line x1="494.5" y1="746.95" x2="935.0" y2="746.95" stroke="#000" stroke-opacity="0.09" stroke-width="0.9"/>
<line x1="494.5" y1="701.7" x2="494.5" y2="762.3" stroke="#4a4a4a" stroke-width="1"/>
<line x1="494.0" y1="762.3" x2="935.0" y2="762.3" stroke="#4a4a4a" stroke-width="1"/>
<line x1="491.5" y1="702.20" x2="494.5" y2="702.20" stroke="#444" stroke-width="1"/>
<line x1="491.5" y1="709.50" x2="494.5" y2="709.50" stroke="#444" stroke-width="1"/>
<line x1="491.5" y1="728.22" x2="494.5" y2="728.22" stroke="#444" stroke-width="1"/>
<line x1="491.5" y1="746.95" x2="494.5" y2="746.95" stroke="#444" stroke-width="1"/>
<text x="489.90" y="711.50" font-size="6.7" fill="#1a1a1a" text-anchor="end" textLength="3.42" lengthAdjust="spacingAndGlyphs" >1</text>
<text x="489.90" y="730.22" font-size="6.7" fill="#1a1a1a" text-anchor="end" textLength="3.42" lengthAdjust="spacingAndGlyphs" >0</text>
<text x="489.90" y="748.95" font-size="6.7" fill="#1a1a1a" text-anchor="end" textLength="5.47" lengthAdjust="spacingAndGlyphs" >-1</text>
<text x="489.90" y="764.30" font-size="6.7" fill="#1a1a1a" text-anchor="end" textLength="5.47" lengthAdjust="spacingAndGlyphs" >-2</text>
<line x1="531.21" y1="762.3" x2="531.21" y2="764.8" stroke="#444" stroke-width="1"/>
<text x="531.21" y="772.30" font-size="6" fill="#333" text-anchor="middle" transform="rotate(-45 531.21 770.30)">1</text>
<line x1="604.62" y1="762.3" x2="604.62" y2="764.8" stroke="#444" stroke-width="1"/>
<text x="604.62" y="772.30" font-size="6" fill="#333" text-anchor="middle" transform="rotate(-45 604.62 770.30)">2</text>
<line x1="678.04" y1="762.3" x2="678.04" y2="764.8" stroke="#444" stroke-width="1"/>
<text x="678.04" y="772.30" font-size="6" fill="#333" text-anchor="middle" transform="rotate(-45 678.04 770.30)">3</text>
<line x1="751.46" y1="762.3" x2="751.46" y2="764.8" stroke="#444" stroke-width="1"/>
<text x="751.46" y="772.30" font-size="6" fill="#333" text-anchor="middle" transform="rotate(-45 751.46 770.30)">4</text>
<line x1="824.88" y1="762.3" x2="824.88" y2="764.8" stroke="#444" stroke-width="1"/>
<text x="824.88" y="772.30" font-size="6" fill="#333" text-anchor="middle" transform="rotate(-45 824.88 770.30)">5</text>
<line x1="898.29" y1="762.3" x2="898.29" y2="764.8" stroke="#444" stroke-width="1"/>
<text x="898.29" y="772.30" font-size="6" fill="#333" text-anchor="middle" transform="rotate(-45 898.29 770.30)">6</text>
</svg>
</svg>
<div class="a" style="left:541px;top:29px;width:429px;height:394px;background:#fff;border:1px solid #a8a8a8;border-top-color:#bbb;box-shadow:1.5px 1.5px 1px rgba(0,0,0,.42)"></div>
<div class="a" style="left:542px;top:32px;width:427px;height:23px;background:#4581ee"></div>
<div class="a" style="left:577.4px;top:38.34px;font-size:12px;line-height:1.117;color:#fff;white-space:nowrap">Neuer Tab</div>
<div class="a" style="right:49px;top:38.34px;font-size:12px;line-height:1.117;color:#fff;white-space:nowrap">Strg+T</div>
<div class="a" style="left:577.4px;top:61.54px;font-size:12px;line-height:1.117;color:#222;white-space:nowrap">Neues Fenster</div>
<div class="a" style="right:49px;top:61.54px;font-size:12px;line-height:1.117;color:#9a9a9a;white-space:nowrap">Strg+N</div>
<div class="a" style="left:577.4px;top:84.84px;font-size:12px;line-height:1.117;color:#222;white-space:nowrap">Neues Inkognito-Fenster</div>
<div class="a" style="right:49px;top:84.84px;font-size:12px;line-height:1.117;color:#9a9a9a;white-space:nowrap">Strg+Umschalt+N</div>
<div class="a" style="left:577.4px;top:119.14px;font-size:12px;line-height:1.117;color:#222;white-space:nowrap">Verlauf</div>
<div class="a" style="left:577.4px;top:141.64px;font-size:12px;line-height:1.117;color:#222;white-space:nowrap">Downloads</div>
<div class="a" style="right:49px;top:141.64px;font-size:12px;line-height:1.117;color:#9a9a9a;white-space:nowrap">Strg+J</div>
<div class="a" style="left:577.4px;top:164.74px;font-size:12px;line-height:1.117;color:#222;white-space:nowrap">Lesezeichen</div>
<div class="a" style="left:577.4px;top:199.04px;font-size:12px;line-height:1.117;color:#222;white-space:nowrap">Zoomen</div>
<div class="a" style="left:577.4px;top:233.34px;font-size:12px;line-height:1.117;color:#222;white-space:nowrap">Drucken&#8230;</div>
<div class="a" style="right:49px;top:233.34px;font-size:12px;line-height:1.117;color:#9a9a9a;white-space:nowrap">Strg+P</div>
<div class="a" style="left:577.4px;top:255.84px;font-size:12px;line-height:1.117;color:#222;white-space:nowrap">Suchen&#8230;</div>
<div class="a" style="right:49px;top:255.84px;font-size:12px;line-height:1.117;color:#9a9a9a;white-space:nowrap">Strg+F</div>
<div class="a" style="left:577.4px;top:278.74px;font-size:12px;line-height:1.117;color:#222;white-space:nowrap">Weitere Tools</div>
<div class="a" style="left:577.4px;top:313.74px;font-size:12px;line-height:1.117;color:#222;white-space:nowrap">Bearbeiten</div>
<div class="a" style="left:577.4px;top:346.84px;font-size:12px;line-height:1.117;color:#222;white-space:nowrap">Einstellungen</div>
<div class="a" style="left:577.4px;top:369.84px;font-size:12px;line-height:1.117;color:#222;white-space:nowrap">Hilfe</div>
<div class="a" style="left:577.4px;top:403.84px;font-size:12px;line-height:1.117;color:#222;white-space:nowrap">Beenden</div>
<div class="a" style="right:49px;top:403.84px;font-size:12px;line-height:1.117;color:#9a9a9a;white-space:nowrap">Strg+Umschalt+Q</div>
<div class="a" style="left:956px;top:120.0px;width:0;height:0;border-left:4.3px solid #737373;border-top:3.2px solid transparent;border-bottom:3.2px solid transparent"></div>
<div class="a" style="left:956px;top:166.2px;width:0;height:0;border-left:4.3px solid #737373;border-top:3.2px solid transparent;border-bottom:3.2px solid transparent"></div>
<div class="a" style="left:956px;top:279.9px;width:0;height:0;border-left:4.3px solid #737373;border-top:3.2px solid transparent;border-bottom:3.2px solid transparent"></div>
<div class="a" style="left:956px;top:371.0px;width:0;height:0;border-left:4.3px solid #737373;border-top:3.2px solid transparent;border-bottom:3.2px solid transparent"></div>
<div class="a" style="left:542px;top:106px;width:427px;height:1px;background:#e6e6e6"></div>
<div class="a" style="left:542px;top:187px;width:427px;height:1px;background:#e6e6e6"></div>
<div class="a" style="left:542px;top:221px;width:427px;height:1px;background:#e6e6e6"></div>
<div class="a" style="left:542px;top:301px;width:427px;height:1px;background:#e6e6e6"></div>
<div class="a" style="left:542px;top:335px;width:427px;height:1px;background:#e6e6e6"></div>
<div class="a" style="left:542px;top:391px;width:427px;height:1px;background:#e6e6e6"></div>
<div class="a" style="left:799px;top:188px;width:1px;height:33px;background:#e6e6e6"></div>
<div class="a" style="left:914px;top:188px;width:1px;height:33px;background:#e6e6e6"></div>
<div class="a" style="left:658.6px;top:302px;width:1px;height:33.5px;background:#e6e6e6"></div>
<div class="a" style="left:762.2px;top:302px;width:1px;height:33.5px;background:#e6e6e6"></div>
<div class="a" style="left:866.2px;top:302px;width:1px;height:33.5px;background:#e6e6e6"></div>
<div class="a" style="left:718.5px;width:200px;text-align:center;top:199.04px;font-size:12px;line-height:1.117;color:#222;white-space:nowrap">&#8211;</div>
<div class="a" style="left:759px;width:200px;text-align:center;top:199.04px;font-size:12px;line-height:1.117;color:#222;white-space:nowrap">50 %</div>
<div class="a" style="left:794px;width:200px;text-align:center;top:199.04px;font-size:12px;line-height:1.117;color:#222;white-space:nowrap">+</div>
<div class="a" style="left:609.5px;width:200px;text-align:center;top:312.84px;font-size:12px;line-height:1.117;color:#222;white-space:nowrap">Ausschneiden</div>
<div class="a" style="left:713.6px;width:200px;text-align:center;top:312.84px;font-size:12px;line-height:1.117;color:#222;white-space:nowrap">Kopieren</div>
<div class="a" style="left:818.5px;width:200px;text-align:center;top:312.84px;font-size:12px;line-height:1.117;color:#222;white-space:nowrap">Einf&#252;gen</div>
<svg class="a" style="left:932.5px;top:196.5px" width="20" height="16"><path d="M1 4.6V1h3.6M14.4 1H18v3.6M18 10.4V14h-3.6M4.6 14H1v-3.6" fill="none" stroke="#7a7a7a" stroke-width="1.5"/></svg>
<svg class="a" style="left:780px;top:0" width="194" height="34">
<circle cx="15" cy="14" r="5.3" fill="none" stroke="#505050" stroke-width="1.5"/><line x1="12.3" y1="14" x2="17.7" y2="14" stroke="#505050" stroke-width="1.3"/><line x1="18.8" y1="17.8" x2="22.3" y2="21.3" stroke="#505050" stroke-width="2"/>
<rect x="32.5" y="8" width="8.7" height="5.6" rx="1.5" fill="#555"/><rect x="34.3" y="9.6" width="5" height="1.3" fill="#ddd"/><rect x="35.5" y="13" width="3" height="8.5" rx="1" fill="#555"/><rect x="36.5" y="14" width="1" height="6" fill="#bbb"/>
<rect x="50" y="7" width="9" height="9" rx="1.5" fill="#555"/><text x="54.5" y="14.5" font-size="7.5" fill="#eee" text-anchor="middle" font-family="Liberation Sans">&#25991;</text><rect x="57" y="14" width="9" height="8.7" rx="1.5" fill="#505050"/><text x="61.5" y="21" font-size="7" fill="#e8e8e8" text-anchor="middle" font-family="Liberation Sans">A</text>
<path d="M79.5 6.6 L82.3 12.1 L88.2 12.9 L83.9 17 L85 22.9 L79.5 20 L74 22.9 L75.1 17 L70.8 12.9 L76.7 12.1Z" fill="#fddc5a" stroke="#d8a02e" stroke-width="1.1" stroke-linejoin="round"/>
<rect x="102.5" y="6.5" width="18" height="18" fill="#2b0d0d" stroke="#e3221b" stroke-width="1.2"/><path d="M110.8 9.5 C112.5 9.8 111.6 13 110.3 15.3 C109 17.7 107.5 19.8 106.5 21 C106 21.6 105.5 21 106 20.3 C108 18 111.5 16 115.5 16 C117.5 16 118 17.6 116.6 17.9 C114.5 18.2 112.3 16 111 14 C109.8 12 109.6 9.3 110.8 9.5Z" fill="none" stroke="#d9d9d9" stroke-width="1.1"/>
<circle cx="144.5" cy="15" r="8" fill="#10aaec"/><circle cx="139" cy="9.8" r="3.6" fill="#10aaec"/><circle cx="150" cy="20.3" r="3.6" fill="#10aaec"/><text x="144.5" y="19.8" font-size="13" font-weight="bold" fill="#fff" text-anchor="middle" font-family="Liberation Sans">S</text>
<defs><linearGradient id="mbg" x1="0" x2="0" y1="0" y2="1"><stop offset="0" stop-color="#d6d6d6"/><stop offset="1" stop-color="#c2c2c2"/></linearGradient></defs>
<rect x="162.5" y="2.5" width="26" height="26" rx="3" fill="url(#mbg)" stroke="#a6a6a6" stroke-width="1"/>
<rect x="168.6" y="9" width="13.6" height="2.8" rx="1.4" fill="#4a4a4a"/><rect x="168.6" y="14.1" width="13.6" height="2.8" rx="1.4" fill="#4a4a4a"/><rect x="168.6" y="19.2" width="13.6" height="2.8" rx="1.4" fill="#4a4a4a"/>
</svg>
</body></html>
